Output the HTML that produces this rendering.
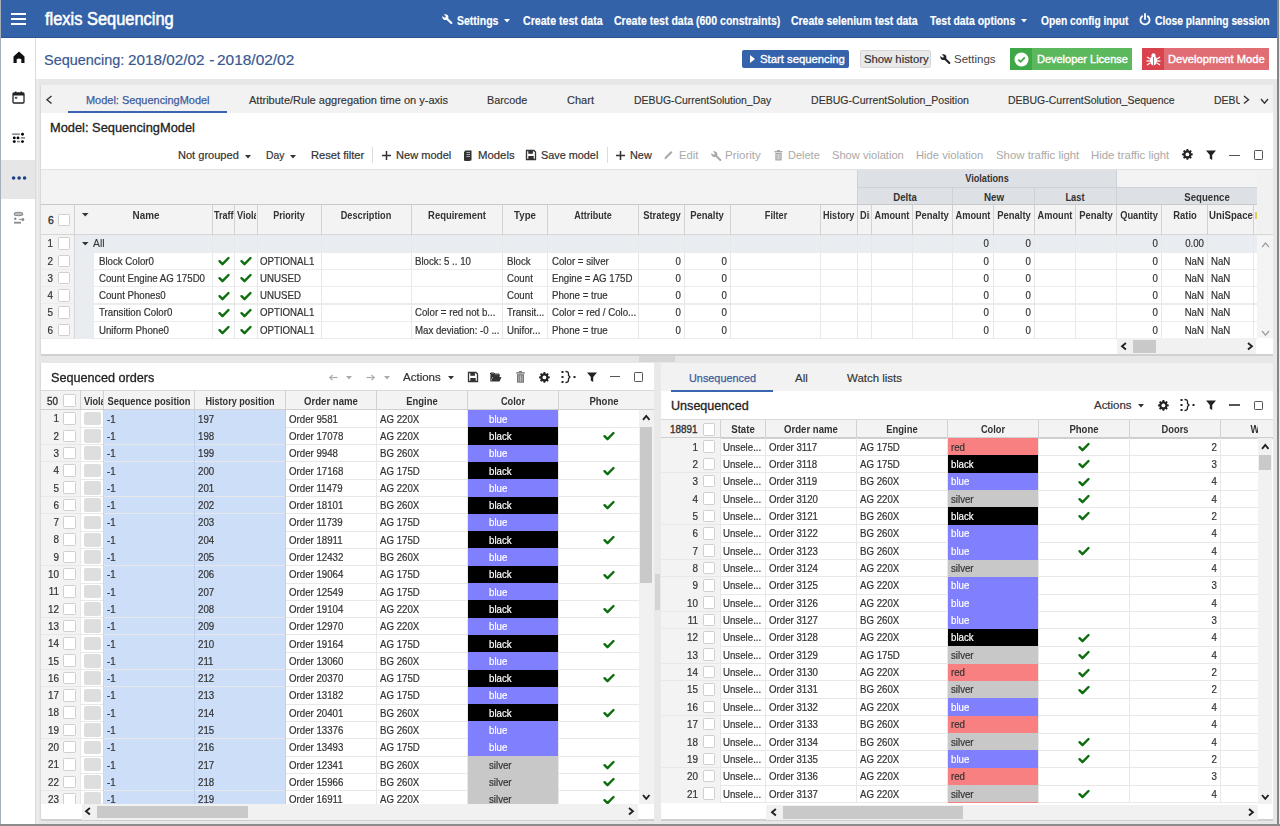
<!DOCTYPE html><html><head><meta charset="utf-8"><style>
html,body{margin:0;padding:0;}
body{width:1280px;height:826px;position:relative;overflow:hidden;filter:blur(0.3px);background:#e7e7e7;font-family:"Liberation Sans",sans-serif;}
.a{position:absolute;}
.t{position:absolute;white-space:nowrap;font-family:"Liberation Sans",sans-serif;}
svg{overflow:visible}
</style></head><body>
<div class="a" style="left:0.00px;top:0.00px;width:1.40px;height:826.00px;background:#a5b0bb;"></div>
<div class="a" style="left:1277.00px;top:0.00px;width:3.00px;height:826.00px;background:#e9e9e9;"></div>
<div class="a" style="left:1277.30px;top:0.00px;width:1.50px;height:826.00px;background:#858585;"></div>
<div class="a" style="left:0.00px;top:824.00px;width:1280.00px;height:2.00px;background:#8c8c8c;"></div>
<div class="a" style="left:1.40px;top:0.00px;width:1275.60px;height:38.00px;background:#3462a8;"></div>
<div class="a" style="left:1.40px;top:37.00px;width:1275.60px;height:1.00px;background:#2b5396;"></div>
<div class="a" style="left:11.00px;top:12.60px;width:15.00px;height:2.10px;background:#fff;"></div>
<div class="a" style="left:11.00px;top:17.80px;width:15.00px;height:2.10px;background:#fff;"></div>
<div class="a" style="left:11.00px;top:23.00px;width:15.00px;height:2.10px;background:#fff;"></div>
<div class="t" style="top:10.60px;font-size:17.6px;line-height:17.6px;color:#fff;left:45.30px;transform:scaleX(0.9334);transform-origin:left 0;-webkit-text-stroke:0.55px #fff;">flexis Sequencing</div>
<svg class="a" style="left:441.00px;top:13.00px;" width="12" height="12" viewBox="0 0 12 12"><path transform="translate(12,0) scale(-1,1)" d="M10.6 2.9 8.9 4.6 7.4 4.6 7.4 3.1 9.1 1.4C7.9 0.9 6.4 1.2 5.5 2.1 4.6 3 4.4 4.3 4.8 5.4L0.9 9.3C0.5 9.7 0.5 10.4 0.9 10.8 1.3 11.2 2 11.2 2.4 10.8L6.3 6.9C7.4 7.3 8.8 7.1 9.7 6.2 10.6 5.3 10.9 4 10.6 2.9Z" fill="#fff"/></svg>
<div class="t" style="top:14.84px;font-size:12px;line-height:12px;color:#fff;left:456.50px;transform:scaleX(0.8753);transform-origin:left 0;-webkit-text-stroke:0.15px #fff;font-weight:bold;">Settings</div>
<svg class="a" style="left:503.50px;top:18.50px;" width="6" height="4" viewBox="0 0 6 4"><path d="M0 0H6L3.0 3.5Z" fill="#fff"/></svg>
<div class="t" style="top:14.84px;font-size:12px;line-height:12px;color:#fff;left:523.30px;transform:scaleX(0.8844);transform-origin:left 0;-webkit-text-stroke:0.15px #fff;font-weight:bold;">Create test data</div>
<div class="t" style="top:14.84px;font-size:12px;line-height:12px;color:#fff;left:613.80px;transform:scaleX(0.8782);transform-origin:left 0;-webkit-text-stroke:0.15px #fff;font-weight:bold;">Create test data (600 constraints)</div>
<div class="t" style="top:14.84px;font-size:12px;line-height:12px;color:#fff;left:791.30px;transform:scaleX(0.8710);transform-origin:left 0;-webkit-text-stroke:0.15px #fff;font-weight:bold;">Create selenium test data</div>
<div class="t" style="top:14.84px;font-size:12px;line-height:12px;color:#fff;left:930.10px;transform:scaleX(0.8658);transform-origin:left 0;-webkit-text-stroke:0.15px #fff;font-weight:bold;">Test data options</div>
<svg class="a" style="left:1021.00px;top:18.50px;" width="6" height="4" viewBox="0 0 6 4"><path d="M0 0H6L3.0 3.5Z" fill="#fff"/></svg>
<div class="t" style="top:14.84px;font-size:12px;line-height:12px;color:#fff;left:1041.30px;transform:scaleX(0.8527);transform-origin:left 0;-webkit-text-stroke:0.15px #fff;font-weight:bold;">Open config input</div>
<svg class="a" style="left:1139.00px;top:13.00px;" width="12" height="12" viewBox="0 0 12 12"><path d="M3.2 3.2A4.6 4.6 0 1 0 8.8 3.2" fill="none" stroke="#fff" stroke-width="1.8" stroke-linecap="round"/><path d="M6 1V6" stroke="#fff" stroke-width="1.8" stroke-linecap="round"/></svg>
<div class="t" style="top:14.84px;font-size:12px;line-height:12px;color:#fff;left:1154.80px;transform:scaleX(0.8553);transform-origin:left 0;-webkit-text-stroke:0.15px #fff;font-weight:bold;">Close planning session</div>
<div class="a" style="left:1.40px;top:38.00px;width:33.60px;height:786.00px;background:#ffffff;"></div>
<div class="a" style="left:35.00px;top:38.00px;width:1.00px;height:786.00px;background:#dcdcdc;"></div>
<div class="a" style="left:1.40px;top:159.50px;width:33.60px;height:39.00px;background:#e6e6e6;"></div>
<svg class="a" style="left:13.00px;top:51.00px;" width="12" height="12" viewBox="0 0 12 12"><path d="M6 0.5 11.5 5.5V12H8.3V8.3Q6 6.8 3.7 8.3V12H0.5V5.5Z" fill="#111"/></svg>
<svg class="a" style="left:12.20px;top:91.00px;" width="13" height="13" viewBox="0 0 13 13"><rect x="1" y="2" width="11" height="10" rx="1" fill="none" stroke="#222" stroke-width="1.3"/><rect x="1" y="2" width="11" height="2.5" fill="#222"/><rect x="3" y="0.5" width="1.4" height="2.5" fill="#222"/><rect x="8.6" y="0.5" width="1.4" height="2.5" fill="#222"/><rect x="2.8" y="5.8" width="2.5" height="2" fill="#555"/></svg>
<svg class="a" style="left:8.00px;top:128.00px;" width="22" height="20" viewBox="0 0 22 20"><g fill="#000"><circle cx="14.5" cy="6.2" r="1.45"/><circle cx="6.3" cy="9.9" r="1.45"/><circle cx="10" cy="9.9" r="1.45"/><circle cx="6.3" cy="13.6" r="1.45"/><circle cx="14.5" cy="13.6" r="1.45"/></g><g stroke="#8a8a8a" stroke-width="1.7"><path d="M4.2 6.2H11.9"/><path d="M12.8 9.9H17"/><path d="M9 13.6H12.1"/></g></svg>
<svg class="a" style="left:10.50px;top:175.80px;" width="17" height="4" viewBox="0 0 17 4"><g fill="#1d3f80"><circle cx="2.6" cy="2" r="1.8"/><circle cx="8.1" cy="2" r="1.8"/><circle cx="13.6" cy="2" r="1.8"/></g></svg>
<svg class="a" style="left:8.00px;top:205.00px;" width="22" height="25" viewBox="0 0 22 25"><ellipse cx="10.5" cy="9" rx="4.2" ry="1.7" fill="#bdbdbd" stroke="#8a8a8a" stroke-width="1.1"/><circle cx="7.3" cy="13.8" r="1.2" fill="#8a8a8a"/><path d="M10.8 14.4H13.5" stroke="#9a9a9a" stroke-width="1.1"/><circle cx="14.8" cy="14.4" r="1.5" fill="#8a8a8a"/><rect x="6" y="16.8" width="7" height="1.8" fill="#8a8a8a"/></svg>
<div class="a" style="left:36.00px;top:38.00px;width:1241.00px;height:41.00px;background:#ffffff;"></div>
<div class="t" style="top:52.18px;font-size:15.5px;line-height:15.5px;color:#395792;left:44.40px;transform:scaleX(0.9327);transform-origin:left 0;-webkit-text-stroke:0.2px #395792;">Sequencing:</div>
<div class="t" style="top:52.18px;font-size:15.5px;line-height:15.5px;color:#395792;left:128.20px;transform:scaleX(0.9846);transform-origin:left 0;-webkit-text-stroke:0.2px #395792;">2018/02/02</div>
<div class="t" style="top:52.18px;font-size:15.5px;line-height:15.5px;color:#395792;left:209.30px;-webkit-text-stroke:0.2px #395792;">-</div>
<div class="t" style="top:52.18px;font-size:15.5px;line-height:15.5px;color:#395792;left:216.60px;transform:scaleX(0.9962);transform-origin:left 0;-webkit-text-stroke:0.2px #395792;">2018/02/02</div>
<div class="a" style="left:742.00px;top:49.80px;width:106.60px;height:18.60px;background:#3463ab;border-radius:2px;"></div>
<svg class="a" style="left:750.00px;top:55.20px;" width="6" height="8" viewBox="0 0 6 8"><path d="M0 0 5 4 0 8Z" fill="#fff"/></svg>
<div class="t" style="top:53.61px;font-size:11.8px;line-height:11.8px;color:#fff;left:760.30px;transform:scaleX(0.9580);transform-origin:left 0;-webkit-text-stroke:0.35px #fff;">Start sequencing</div>
<div class="a" style="left:860.00px;top:49.80px;width:71.00px;height:18.60px;background:#e9e9e9;border:1px solid #d6d6d6;box-sizing:border-box;border-radius:2px;"></div>
<div class="t" style="top:53.61px;font-size:11.8px;line-height:11.8px;color:#333;left:863.80px;transform:scaleX(0.9568);transform-origin:left 0;-webkit-text-stroke:0.2px #333;">Show history</div>
<svg class="a" style="left:939.00px;top:52.50px;" width="12" height="12" viewBox="0 0 12 12"><path transform="translate(12,0) scale(-1,1)" d="M10.6 2.9 8.9 4.6 7.4 4.6 7.4 3.1 9.1 1.4C7.9 0.9 6.4 1.2 5.5 2.1 4.6 3 4.4 4.3 4.8 5.4L0.9 9.3C0.5 9.7 0.5 10.4 0.9 10.8 1.3 11.2 2 11.2 2.4 10.8L6.3 6.9C7.4 7.3 8.8 7.1 9.7 6.2 10.6 5.3 10.9 4 10.6 2.9Z" fill="#222"/></svg>
<div class="t" style="top:53.61px;font-size:11.8px;line-height:11.8px;color:#444;left:954.00px;transform:scaleX(0.9739);transform-origin:left 0;">Settings</div>
<div class="a" style="left:1009.80px;top:48.00px;width:122.60px;height:21.50px;background:#5cb85c;"></div>
<div class="a" style="left:1009.80px;top:48.00px;width:21.90px;height:21.50px;background:#3fa846;"></div>
<svg class="a" style="left:1013.50px;top:51.50px;" width="15" height="15" viewBox="0 0 15 15"><circle cx="7.5" cy="7.5" r="7" fill="#fff"/><path d="M4.3 7.6 6.6 9.8 10.8 5.4" fill="none" stroke="#3fa846" stroke-width="1.8"/></svg>
<div class="t" style="top:53.61px;font-size:11.8px;line-height:11.8px;color:#fff;left:1037.30px;transform:scaleX(0.9295);transform-origin:left 0;-webkit-text-stroke:0.4px #fff;">Developer License</div>
<div class="a" style="left:1141.80px;top:48.00px;width:127.20px;height:21.50px;background:#e06d74;"></div>
<div class="a" style="left:1141.80px;top:48.00px;width:21.80px;height:21.50px;background:#d9434e;"></div>
<svg class="a" style="left:1145.50px;top:51.50px;" width="15" height="15" viewBox="0 0 15 15"><g fill="#fff"><ellipse cx="7.5" cy="8.5" rx="3.6" ry="4.8"/><circle cx="7.5" cy="3.2" r="2"/></g><g stroke="#fff" stroke-width="1.2"><path d="M1 5 4 7"/><path d="M14 5 11 7"/><path d="M0.5 9H4"/><path d="M14.5 9H11"/><path d="M1 13 4 11"/><path d="M14 13 11 11"/></g><path d="M7.5 5V13" stroke="#d9434e" stroke-width="0.9"/></svg>
<div class="t" style="top:53.61px;font-size:11.8px;line-height:11.8px;color:#fff;left:1168.30px;transform:scaleX(0.9446);transform-origin:left 0;-webkit-text-stroke:0.4px #fff;">Development Mode</div>
<div class="a" style="left:41.00px;top:85.00px;width:1231.50px;height:270.00px;background:#ffffff;"></div>
<div class="a" style="left:41.00px;top:85.00px;width:1231.50px;height:28.00px;background:#f2f2f2;"></div>
<svg class="a" style="left:46.50px;top:96.00px;" width="4.5" height="7.5" viewBox="0 0 4.5 7.5"><path d="M4.5 0 0 3.75 4.5 7.5" fill="none" stroke="#333" stroke-width="1.4"/></svg>
<div class="t" style="top:94.68px;font-size:11.3px;line-height:11.3px;color:#3d5d9d;left:86.00px;transform:scaleX(0.9689);transform-origin:left 0;-webkit-text-stroke:0.25px #3d5d9d;">Model: SequencingModel</div>
<div class="a" style="left:67.50px;top:111.20px;width:159.50px;height:1.80px;background:#3a66b0;"></div>
<div class="t" style="top:94.68px;font-size:11.3px;line-height:11.3px;color:#333;left:248.70px;transform:scaleX(0.9751);transform-origin:left 0;-webkit-text-stroke:0.15px #333;">Attribute/Rule aggregation time on y-axis</div>
<div class="t" style="top:94.68px;font-size:11.3px;line-height:11.3px;color:#333;left:487.00px;transform:scaleX(0.9552);transform-origin:left 0;-webkit-text-stroke:0.15px #333;">Barcode</div>
<div class="t" style="top:94.68px;font-size:11.3px;line-height:11.3px;color:#333;left:566.80px;transform:scaleX(0.9770);transform-origin:left 0;-webkit-text-stroke:0.15px #333;">Chart</div>
<div class="t" style="top:94.68px;font-size:11.3px;line-height:11.3px;color:#333;left:633.60px;transform:scaleX(0.9219);transform-origin:left 0;-webkit-text-stroke:0.15px #333;">DEBUG-CurrentSolution_Day</div>
<div class="t" style="top:94.68px;font-size:11.3px;line-height:11.3px;color:#333;left:810.50px;transform:scaleX(0.9348);transform-origin:left 0;-webkit-text-stroke:0.15px #333;">DEBUG-CurrentSolution_Position</div>
<div class="t" style="top:94.68px;font-size:11.3px;line-height:11.3px;color:#333;left:1008.00px;transform:scaleX(0.9276);transform-origin:left 0;-webkit-text-stroke:0.15px #333;">DEBUG-CurrentSolution_Sequence</div>
<div class="a" style="left:1214px;top:94px;width:26px;height:14px;overflow:hidden">
<div class="t" style="top:0.68px;font-size:11.3px;line-height:11.3px;color:#333;left:0.00px;transform:scaleX(0.925);transform-origin:left 0;-webkit-text-stroke:0.15px #333;">DEBUG</div>
</div>
<svg class="a" style="left:1244.00px;top:96.00px;" width="4.5" height="7.5" viewBox="0 0 4.5 7.5"><path d="M0 0 4.5 3.75 0 7.5" fill="none" stroke="#333" stroke-width="1.4"/></svg>
<svg class="a" style="left:1260.50px;top:98.50px;" width="7" height="4.2" viewBox="0 0 7 4.2"><path d="M0 0 3.5 4.2 7 0" fill="none" stroke="#333" stroke-width="1.4"/></svg>
<div class="t" style="top:121.20px;font-size:13px;line-height:13px;color:#222;left:50.30px;transform:scaleX(0.9877);transform-origin:left 0;-webkit-text-stroke:0.3px #222;">Model: SequencingModel</div>
<div class="t" style="top:149.93px;font-size:11.3px;line-height:11.3px;color:#333;left:178.20px;transform:scaleX(0.9775);transform-origin:left 0;-webkit-text-stroke:0.2px #333;">Not grouped</div>
<svg class="a" style="left:245.00px;top:154.50px;" width="6" height="4" viewBox="0 0 6 4"><path d="M0 0H6L3.0 3.5Z" fill="#333"/></svg>
<div class="t" style="top:149.93px;font-size:11.3px;line-height:11.3px;color:#333;left:265.60px;transform:scaleX(0.9153);transform-origin:left 0;-webkit-text-stroke:0.2px #333;">Day</div>
<svg class="a" style="left:290.00px;top:154.50px;" width="6" height="4" viewBox="0 0 6 4"><path d="M0 0H6L3.0 3.5Z" fill="#333"/></svg>
<div class="t" style="top:149.93px;font-size:11.3px;line-height:11.3px;color:#333;left:311.40px;transform:scaleX(0.9869);transform-origin:left 0;-webkit-text-stroke:0.2px #333;">Reset filter</div>
<div class="a" style="left:372.00px;top:147.00px;width:1.00px;height:16.00px;background:#dcdcdc;"></div>
<svg class="a" style="left:381.50px;top:150.50px;" width="9" height="9" viewBox="0 0 9 9"><path d="M4.5 0V9M0 4.5H9" stroke="#333" stroke-width="1.5"/></svg>
<div class="t" style="top:149.93px;font-size:11.3px;line-height:11.3px;color:#333;left:396.00px;transform:scaleX(0.9783);transform-origin:left 0;-webkit-text-stroke:0.2px #333;">New model</div>
<svg class="a" style="left:464.00px;top:149.50px;" width="8" height="11" viewBox="0 0 8 11"><rect x="1" y="0.5" width="6.5" height="10" fill="#333"/><path d="M0.5 1.5V10.5H6" stroke="#333" fill="none"/><path d="M2.5 2.5H6M2.5 4.5H6M2.5 6.5H6" stroke="#fff" stroke-width="0.6"/></svg>
<div class="t" style="top:149.93px;font-size:11.3px;line-height:11.3px;color:#333;left:478.00px;transform:scaleX(1.0046);transform-origin:left 0;-webkit-text-stroke:0.2px #333;">Models</div>
<svg class="a" style="left:526.00px;top:150.00px;" width="10" height="10" viewBox="0 0 10 10"><path d="M0.5 0.5H8L9.5 2V9.5H0.5Z" fill="none" stroke="#333" stroke-width="1.3"/><rect x="2.3" y="0.8" width="4.6" height="3" fill="#333"/><rect x="2.3" y="6" width="5.4" height="3.5" fill="#333"/></svg>
<div class="t" style="top:149.93px;font-size:11.3px;line-height:11.3px;color:#333;left:541.00px;transform:scaleX(0.9604);transform-origin:left 0;-webkit-text-stroke:0.2px #333;">Save model</div>
<div class="a" style="left:606.50px;top:147.00px;width:1.00px;height:16.00px;background:#dcdcdc;"></div>
<svg class="a" style="left:615.50px;top:150.50px;" width="9" height="9" viewBox="0 0 9 9"><path d="M4.5 0V9M0 4.5H9" stroke="#333" stroke-width="1.5"/></svg>
<div class="t" style="top:149.93px;font-size:11.3px;line-height:11.3px;color:#333;left:630.00px;transform:scaleX(0.9638);transform-origin:left 0;-webkit-text-stroke:0.2px #333;">New</div>
<svg class="a" style="left:663.50px;top:150.00px;" width="9" height="10" viewBox="0 0 9 10"><path d="M0.5 9.5 1 7 7 1 8.5 2.5 2.5 8.5Z" fill="#a9a9a9"/></svg>
<div class="t" style="top:149.93px;font-size:11.3px;line-height:11.3px;color:#a9a9a9;left:679.00px;transform:scaleX(0.9909);transform-origin:left 0;">Edit</div>
<svg class="a" style="left:709.50px;top:150.00px;" width="12" height="12" viewBox="0 0 12 12"><path transform="translate(12,0) scale(-1,1)" d="M10.6 2.9 8.9 4.6 7.4 4.6 7.4 3.1 9.1 1.4C7.9 0.9 6.4 1.2 5.5 2.1 4.6 3 4.4 4.3 4.8 5.4L0.9 9.3C0.5 9.7 0.5 10.4 0.9 10.8 1.3 11.2 2 11.2 2.4 10.8L6.3 6.9C7.4 7.3 8.8 7.1 9.7 6.2 10.6 5.3 10.9 4 10.6 2.9Z" fill="#a9a9a9"/></svg>
<div class="t" style="top:149.93px;font-size:11.3px;line-height:11.3px;color:#a9a9a9;left:725.00px;transform:scaleX(1.0181);transform-origin:left 0;">Priority</div>
<svg class="a" style="left:773.50px;top:149.50px;" width="9" height="11" viewBox="0 0 9 11"><rect x="0.5" y="1" width="8" height="1.4" fill="#a9a9a9"/><rect x="3" y="0" width="3" height="1.4" fill="#a9a9a9"/><rect x="1.3" y="3" width="6.4" height="7.5" fill="#a9a9a9"/><path d="M3 4V9.5M4.5 4V9.5M6 4V9.5" stroke="#fff" stroke-width="0.5"/></svg>
<div class="t" style="top:149.93px;font-size:11.3px;line-height:11.3px;color:#a9a9a9;left:787.50px;transform:scaleX(0.9735);transform-origin:left 0;">Delete</div>
<div class="t" style="top:149.93px;font-size:11.3px;line-height:11.3px;color:#a9a9a9;left:831.50px;transform:scaleX(0.9853);transform-origin:left 0;">Show violation</div>
<div class="t" style="top:149.93px;font-size:11.3px;line-height:11.3px;color:#a9a9a9;left:916.00px;transform:scaleX(0.9921);transform-origin:left 0;">Hide violation</div>
<div class="t" style="top:149.93px;font-size:11.3px;line-height:11.3px;color:#a9a9a9;left:996.00px;transform:scaleX(1.0073);transform-origin:left 0;">Show traffic light</div>
<div class="t" style="top:149.93px;font-size:11.3px;line-height:11.3px;color:#a9a9a9;left:1091.00px;transform:scaleX(1.0082);transform-origin:left 0;">Hide traffic light</div>
<svg class="a" style="left:1182.20px;top:149.30px;" width="10.8" height="10.8" viewBox="0 0 10.8 10.8"><path d="M9.13 4.25 L10.73 4.54 L10.73 6.26 L9.13 6.55 L8.85 7.22 L9.78 8.56 L8.56 9.78 L7.22 8.85 L6.55 9.13 L6.26 10.73 L4.54 10.73 L4.25 9.13 L3.58 8.85 L2.24 9.78 L1.02 8.56 L1.95 7.22 L1.67 6.55 L0.07 6.26 L0.07 4.54 L1.67 4.25 L1.95 3.58 L1.02 2.24 L2.24 1.02 L3.58 1.95 L4.25 1.67 L4.54 0.07 L6.26 0.07 L6.55 1.67 L7.22 1.95 L8.56 1.02 L9.78 2.24 L8.85 3.58Z" fill="#222"/><circle cx="5.4" cy="5.4" r="3.9" fill="#222"/><circle cx="5.4" cy="5.4" r="1.9" fill="#fff"/></svg>
<svg class="a" style="left:1206.00px;top:149.50px;" width="10" height="10" viewBox="0 0 10 10"><path d="M0 0.5H10L6.2 5V10L3.8 8.5V5Z" fill="#222"/></svg>
<div class="a" style="left:1229.30px;top:154.60px;width:10.30px;height:1.30px;background:#555;"></div>
<div class="a" style="left:1253.60px;top:150.20px;width:9.50px;height:9.50px;border:1.3px solid #555;box-sizing:border-box;border-radius:1.2px;"></div>
<div class="a" style="left:41.00px;top:168.50px;width:1231.50px;height:1.00px;background:#e2e2e2;"></div>
<div class="a" style="left:41.00px;top:169.50px;width:1231.50px;height:35.00px;background:#f3f3f3;"></div>
<div class="a" style="left:857.60px;top:169.50px;width:258.40px;height:17.50px;background:#dde1e6;"></div>
<div class="a" style="left:857.60px;top:187.00px;width:399.40px;height:17.50px;background:#dde1e6;"></div>
<div class="a" style="left:857.60px;top:186.50px;width:399.40px;height:1.00px;background:#cdd2d8;"></div>
<div class="a" style="left:857.10px;top:187.00px;width:1.00px;height:17.50px;background:#cdd2d8;"></div>
<div class="a" style="left:952.20px;top:187.00px;width:1.00px;height:17.50px;background:#cdd2d8;"></div>
<div class="a" style="left:1033.80px;top:187.00px;width:1.00px;height:17.50px;background:#cdd2d8;"></div>
<div class="a" style="left:1115.50px;top:187.00px;width:1.00px;height:17.50px;background:#cdd2d8;"></div>
<div class="a" style="left:857.10px;top:169.50px;width:1.00px;height:35.00px;background:#cdd2d8;"></div>
<div class="a" style="left:1115.50px;top:169.50px;width:1.00px;height:17.50px;background:#cdd2d8;"></div>
<div class="t" style="top:173.50px;font-size:10.4px;line-height:10.4px;color:#333;left:836.80px;width:300px;text-align:center;transform:scaleX(0.8812);transform-origin:center 0;font-weight:bold;">Violations</div>
<div class="t" style="top:192.50px;font-size:10.4px;line-height:10.4px;color:#333;left:755.10px;width:300px;text-align:center;transform:scaleX(0.9275);transform-origin:center 0;font-weight:bold;">Delta</div>
<div class="t" style="top:192.50px;font-size:10.4px;line-height:10.4px;color:#333;left:843.50px;width:300px;text-align:center;transform:scaleX(0.9452);transform-origin:center 0;font-weight:bold;">New</div>
<div class="t" style="top:192.50px;font-size:10.4px;line-height:10.4px;color:#333;left:925.20px;width:300px;text-align:center;transform:scaleX(0.8933);transform-origin:center 0;font-weight:bold;">Last</div>
<div class="t" style="top:192.50px;font-size:10.4px;line-height:10.4px;color:#333;left:1056.50px;width:300px;text-align:center;transform:scaleX(0.9262);transform-origin:center 0;font-weight:bold;">Sequence</div>
<div class="a" style="left:41.00px;top:204.50px;width:1216.00px;height:30.00px;background:#f3f3f3;"></div>
<div class="a" style="left:41.00px;top:204.00px;width:1216.00px;height:1.20px;background:#c9c9c9;"></div>
<div class="a" style="left:41.00px;top:234.00px;width:1231.50px;height:1.20px;background:#d6d6d6;"></div>
<div class="a" style="left:74.25px;top:205.00px;width:1.00px;height:30.00px;background:#d2d2d2;"></div>
<div class="a" style="left:211.75px;top:205.00px;width:1.00px;height:30.00px;background:#d2d2d2;"></div>
<div class="a" style="left:234.25px;top:205.00px;width:1.00px;height:30.00px;background:#d2d2d2;"></div>
<div class="a" style="left:256.75px;top:205.00px;width:1.00px;height:30.00px;background:#d2d2d2;"></div>
<div class="a" style="left:320.50px;top:205.00px;width:1.00px;height:30.00px;background:#d2d2d2;"></div>
<div class="a" style="left:411.10px;top:205.00px;width:1.00px;height:30.00px;background:#d2d2d2;"></div>
<div class="a" style="left:502.20px;top:205.00px;width:1.00px;height:30.00px;background:#d2d2d2;"></div>
<div class="a" style="left:547.40px;top:205.00px;width:1.00px;height:30.00px;background:#d2d2d2;"></div>
<div class="a" style="left:638.20px;top:205.00px;width:1.00px;height:30.00px;background:#d2d2d2;"></div>
<div class="a" style="left:684.00px;top:205.00px;width:1.00px;height:30.00px;background:#d2d2d2;"></div>
<div class="a" style="left:729.90px;top:205.00px;width:1.00px;height:30.00px;background:#d2d2d2;"></div>
<div class="a" style="left:820.20px;top:205.00px;width:1.00px;height:30.00px;background:#d2d2d2;"></div>
<div class="a" style="left:857.10px;top:205.00px;width:1.00px;height:30.00px;background:#d2d2d2;"></div>
<div class="a" style="left:870.70px;top:205.00px;width:1.00px;height:30.00px;background:#d2d2d2;"></div>
<div class="a" style="left:911.50px;top:205.00px;width:1.00px;height:30.00px;background:#d2d2d2;"></div>
<div class="a" style="left:952.20px;top:205.00px;width:1.00px;height:30.00px;background:#d2d2d2;"></div>
<div class="a" style="left:992.50px;top:205.00px;width:1.00px;height:30.00px;background:#d2d2d2;"></div>
<div class="a" style="left:1033.80px;top:205.00px;width:1.00px;height:30.00px;background:#d2d2d2;"></div>
<div class="a" style="left:1075.00px;top:205.00px;width:1.00px;height:30.00px;background:#d2d2d2;"></div>
<div class="a" style="left:1115.50px;top:205.00px;width:1.00px;height:30.00px;background:#d2d2d2;"></div>
<div class="a" style="left:1161.30px;top:205.00px;width:1.00px;height:30.00px;background:#d2d2d2;"></div>
<div class="a" style="left:1207.20px;top:205.00px;width:1.00px;height:30.00px;background:#d2d2d2;"></div>
<div class="a" style="left:1252.90px;top:205.00px;width:1.00px;height:30.00px;background:#d2d2d2;"></div>
<div class="a" style="left:1257.00px;top:169.50px;width:15.50px;height:64.50px;background:#f1f1f1;"></div>
<div class="t" style="top:216.28px;font-size:10.3px;line-height:10.3px;color:#333;left:48.00px;-webkit-text-stroke:0.35px #333;">6</div>
<div class="a" style="left:57.80px;top:213.60px;width:12.60px;height:12.60px;background:#fff;border:1px solid #cfcfcf;box-sizing:border-box;border-radius:1.5px;"></div>
<svg class="a" style="left:82.00px;top:213.20px;" width="6.5" height="4" viewBox="0 0 6.5 4"><path d="M0 0H6.5L3.25 3.5Z" fill="#333"/></svg>
<div class="t" style="top:210.50px;font-size:10.4px;line-height:10.4px;color:#333;left:-4.00px;width:300px;text-align:center;transform:scaleX(0.9514);transform-origin:center 0;font-weight:bold;">Name</div>
<div class="t" style="top:210.50px;font-size:10.4px;line-height:10.4px;color:#333;left:139.12px;width:300px;text-align:center;transform:scaleX(0.8630);transform-origin:center 0;font-weight:bold;">Priority</div>
<div class="t" style="top:210.50px;font-size:10.4px;line-height:10.4px;color:#333;left:216.30px;width:300px;text-align:center;transform:scaleX(0.8833);transform-origin:center 0;font-weight:bold;">Description</div>
<div class="t" style="top:210.50px;font-size:10.4px;line-height:10.4px;color:#333;left:307.15px;width:300px;text-align:center;transform:scaleX(0.9100);transform-origin:center 0;font-weight:bold;">Requirement</div>
<div class="t" style="top:210.50px;font-size:10.4px;line-height:10.4px;color:#333;left:375.30px;width:300px;text-align:center;transform:scaleX(0.9321);transform-origin:center 0;font-weight:bold;">Type</div>
<div class="t" style="top:210.50px;font-size:10.4px;line-height:10.4px;color:#333;left:443.30px;width:300px;text-align:center;transform:scaleX(0.8683);transform-origin:center 0;font-weight:bold;">Attribute</div>
<div class="t" style="top:210.50px;font-size:10.4px;line-height:10.4px;color:#333;left:511.60px;width:300px;text-align:center;transform:scaleX(0.9042);transform-origin:center 0;font-weight:bold;">Strategy</div>
<div class="t" style="top:210.50px;font-size:10.4px;line-height:10.4px;color:#333;left:557.45px;width:300px;text-align:center;transform:scaleX(0.9108);transform-origin:center 0;font-weight:bold;">Penalty</div>
<div class="t" style="top:210.50px;font-size:10.4px;line-height:10.4px;color:#333;left:625.55px;width:300px;text-align:center;transform:scaleX(0.8831);transform-origin:center 0;font-weight:bold;">Filter</div>
<div class="t" style="top:210.50px;font-size:10.4px;line-height:10.4px;color:#333;left:741.60px;width:300px;text-align:center;transform:scaleX(0.8865);transform-origin:center 0;font-weight:bold;">Amount</div>
<div class="t" style="top:210.50px;font-size:10.4px;line-height:10.4px;color:#333;left:782.35px;width:300px;text-align:center;transform:scaleX(0.9108);transform-origin:center 0;font-weight:bold;">Penalty</div>
<div class="t" style="top:210.50px;font-size:10.4px;line-height:10.4px;color:#333;left:822.85px;width:300px;text-align:center;transform:scaleX(0.8865);transform-origin:center 0;font-weight:bold;">Amount</div>
<div class="t" style="top:210.50px;font-size:10.4px;line-height:10.4px;color:#333;left:863.65px;width:300px;text-align:center;transform:scaleX(0.9108);transform-origin:center 0;font-weight:bold;">Penalty</div>
<div class="t" style="top:210.50px;font-size:10.4px;line-height:10.4px;color:#333;left:904.90px;width:300px;text-align:center;transform:scaleX(0.8865);transform-origin:center 0;font-weight:bold;">Amount</div>
<div class="t" style="top:210.50px;font-size:10.4px;line-height:10.4px;color:#333;left:945.75px;width:300px;text-align:center;transform:scaleX(0.9108);transform-origin:center 0;font-weight:bold;">Penalty</div>
<div class="t" style="top:210.50px;font-size:10.4px;line-height:10.4px;color:#333;left:988.90px;width:300px;text-align:center;transform:scaleX(0.8918);transform-origin:center 0;font-weight:bold;">Quantity</div>
<div class="t" style="top:210.50px;font-size:10.4px;line-height:10.4px;color:#333;left:1034.75px;width:300px;text-align:center;transform:scaleX(0.9074);transform-origin:center 0;font-weight:bold;">Ratio</div>
<div class="t" style="top:210.50px;font-size:10.4px;line-height:10.4px;color:#333;left:1080.55px;width:300px;text-align:center;transform:scaleX(0.9244);transform-origin:center 0;font-weight:bold;">UniSpace</div>
<div class="a" style="left:212.75px;top:206px;width:21.00px;height:26px;overflow:hidden">
<div class="t" style="top:4.50px;font-size:10.4px;line-height:10.4px;color:#333;left:1.55px;transform:scaleX(0.8717);transform-origin:left 0;font-weight:bold;">Traffic light</div>
</div>
<div class="a" style="left:235.25px;top:206px;width:21.00px;height:26px;overflow:hidden">
<div class="t" style="top:4.50px;font-size:10.4px;line-height:10.4px;color:#333;left:2.05px;transform:scaleX(0.8812);transform-origin:left 0;font-weight:bold;">Violations</div>
</div>
<div class="a" style="left:821.20px;top:206px;width:35.40px;height:26px;overflow:hidden">
<div class="t" style="top:4.50px;font-size:10.4px;line-height:10.4px;color:#333;left:2.20px;transform:scaleX(0.8770);transform-origin:left 0;font-weight:bold;">History</div>
</div>
<div class="a" style="left:858.10px;top:206px;width:12.10px;height:26px;overflow:hidden">
<div class="t" style="top:4.50px;font-size:10.4px;line-height:10.4px;color:#333;left:1.60px;transform:scaleX(0.8841);transform-origin:left 0;font-weight:bold;">Direction</div>
</div>
<div class="a" style="left:1255.30px;top:211.50px;width:1.30px;height:7.00px;background:#e8c860;"></div>
<div class="a" style="left:41.00px;top:235.00px;width:1216.00px;height:17.25px;background:#e9edf1;"></div>
<div class="a" style="left:41.00px;top:235.00px;width:33.75px;height:17.25px;background:#f3f3f3;"></div>
<div class="a" style="left:41.00px;top:251.65px;width:1216.00px;height:1.20px;background:#ececec;"></div>
<div class="a" style="left:57.80px;top:237.30px;width:12.50px;height:12.50px;background:#fff;border:1px solid #cfcfcf;box-sizing:border-box;border-radius:1.5px;"></div>
<div class="t" style="top:239.38px;font-size:10.3px;line-height:10.3px;color:#333;left:-347.50px;width:400px;text-align:right;transform:scaleX(0.96);transform-origin:right 0;-webkit-text-stroke:0.2px #333;">1</div>
<div class="a" style="left:74.75px;top:252.25px;width:19.25px;height:17.25px;background:#e9edf1;"></div>
<div class="a" style="left:41.00px;top:252.25px;width:33.75px;height:17.25px;background:#f3f3f3;"></div>
<div class="a" style="left:41.00px;top:268.90px;width:1216.00px;height:1.20px;background:#ececec;"></div>
<div class="a" style="left:57.80px;top:254.55px;width:12.50px;height:12.50px;background:#fff;border:1px solid #cfcfcf;box-sizing:border-box;border-radius:1.5px;"></div>
<div class="t" style="top:256.63px;font-size:10.3px;line-height:10.3px;color:#333;left:-347.50px;width:400px;text-align:right;transform:scaleX(0.96);transform-origin:right 0;-webkit-text-stroke:0.2px #333;">2</div>
<div class="a" style="left:74.75px;top:269.50px;width:19.25px;height:17.25px;background:#e9edf1;"></div>
<div class="a" style="left:41.00px;top:269.50px;width:33.75px;height:17.25px;background:#f3f3f3;"></div>
<div class="a" style="left:41.00px;top:286.15px;width:1216.00px;height:1.20px;background:#ececec;"></div>
<div class="a" style="left:57.80px;top:271.80px;width:12.50px;height:12.50px;background:#fff;border:1px solid #cfcfcf;box-sizing:border-box;border-radius:1.5px;"></div>
<div class="t" style="top:273.88px;font-size:10.3px;line-height:10.3px;color:#333;left:-347.50px;width:400px;text-align:right;transform:scaleX(0.96);transform-origin:right 0;-webkit-text-stroke:0.2px #333;">3</div>
<div class="a" style="left:74.75px;top:286.75px;width:19.25px;height:17.25px;background:#e9edf1;"></div>
<div class="a" style="left:41.00px;top:286.75px;width:33.75px;height:17.25px;background:#f3f3f3;"></div>
<div class="a" style="left:41.00px;top:303.40px;width:1216.00px;height:1.20px;background:#ececec;"></div>
<div class="a" style="left:57.80px;top:289.05px;width:12.50px;height:12.50px;background:#fff;border:1px solid #cfcfcf;box-sizing:border-box;border-radius:1.5px;"></div>
<div class="t" style="top:291.13px;font-size:10.3px;line-height:10.3px;color:#333;left:-347.50px;width:400px;text-align:right;transform:scaleX(0.96);transform-origin:right 0;-webkit-text-stroke:0.2px #333;">4</div>
<div class="a" style="left:74.75px;top:304.00px;width:19.25px;height:17.25px;background:#e9edf1;"></div>
<div class="a" style="left:41.00px;top:304.00px;width:33.75px;height:17.25px;background:#f3f3f3;"></div>
<div class="a" style="left:41.00px;top:320.65px;width:1216.00px;height:1.20px;background:#ececec;"></div>
<div class="a" style="left:57.80px;top:306.30px;width:12.50px;height:12.50px;background:#fff;border:1px solid #cfcfcf;box-sizing:border-box;border-radius:1.5px;"></div>
<div class="t" style="top:308.38px;font-size:10.3px;line-height:10.3px;color:#333;left:-347.50px;width:400px;text-align:right;transform:scaleX(0.96);transform-origin:right 0;-webkit-text-stroke:0.2px #333;">5</div>
<div class="a" style="left:74.75px;top:321.25px;width:19.25px;height:17.25px;background:#e9edf1;"></div>
<div class="a" style="left:41.00px;top:321.25px;width:33.75px;height:17.25px;background:#f3f3f3;"></div>
<div class="a" style="left:41.00px;top:337.90px;width:1216.00px;height:1.20px;background:#ececec;"></div>
<div class="a" style="left:57.80px;top:323.55px;width:12.50px;height:12.50px;background:#fff;border:1px solid #cfcfcf;box-sizing:border-box;border-radius:1.5px;"></div>
<div class="t" style="top:325.63px;font-size:10.3px;line-height:10.3px;color:#333;left:-347.50px;width:400px;text-align:right;transform:scaleX(0.96);transform-origin:right 0;-webkit-text-stroke:0.2px #333;">6</div>
<div class="a" style="left:74.25px;top:235.00px;width:1.00px;height:103.50px;background:#e8e8e8;"></div>
<div class="a" style="left:211.75px;top:235.00px;width:1.00px;height:103.50px;background:#e8e8e8;"></div>
<div class="a" style="left:234.25px;top:235.00px;width:1.00px;height:103.50px;background:#e8e8e8;"></div>
<div class="a" style="left:256.75px;top:235.00px;width:1.00px;height:103.50px;background:#e8e8e8;"></div>
<div class="a" style="left:320.50px;top:235.00px;width:1.00px;height:103.50px;background:#e8e8e8;"></div>
<div class="a" style="left:411.10px;top:235.00px;width:1.00px;height:103.50px;background:#e8e8e8;"></div>
<div class="a" style="left:502.20px;top:235.00px;width:1.00px;height:103.50px;background:#e8e8e8;"></div>
<div class="a" style="left:547.40px;top:235.00px;width:1.00px;height:103.50px;background:#e8e8e8;"></div>
<div class="a" style="left:638.20px;top:235.00px;width:1.00px;height:103.50px;background:#e8e8e8;"></div>
<div class="a" style="left:684.00px;top:235.00px;width:1.00px;height:103.50px;background:#e8e8e8;"></div>
<div class="a" style="left:729.90px;top:235.00px;width:1.00px;height:103.50px;background:#e8e8e8;"></div>
<div class="a" style="left:820.20px;top:235.00px;width:1.00px;height:103.50px;background:#e8e8e8;"></div>
<div class="a" style="left:857.10px;top:235.00px;width:1.00px;height:103.50px;background:#e8e8e8;"></div>
<div class="a" style="left:870.70px;top:235.00px;width:1.00px;height:103.50px;background:#e8e8e8;"></div>
<div class="a" style="left:911.50px;top:235.00px;width:1.00px;height:103.50px;background:#e8e8e8;"></div>
<div class="a" style="left:952.20px;top:235.00px;width:1.00px;height:103.50px;background:#e8e8e8;"></div>
<div class="a" style="left:992.50px;top:235.00px;width:1.00px;height:103.50px;background:#e8e8e8;"></div>
<div class="a" style="left:1033.80px;top:235.00px;width:1.00px;height:103.50px;background:#e8e8e8;"></div>
<div class="a" style="left:1075.00px;top:235.00px;width:1.00px;height:103.50px;background:#e8e8e8;"></div>
<div class="a" style="left:1115.50px;top:235.00px;width:1.00px;height:103.50px;background:#e8e8e8;"></div>
<div class="a" style="left:1161.30px;top:235.00px;width:1.00px;height:103.50px;background:#e8e8e8;"></div>
<div class="a" style="left:1207.20px;top:235.00px;width:1.00px;height:103.50px;background:#e8e8e8;"></div>
<div class="a" style="left:1252.90px;top:235.00px;width:1.00px;height:103.50px;background:#e8e8e8;"></div>
<div class="a" style="left:74.25px;top:235.00px;width:1.00px;height:103.50px;background:#d8d8d8;"></div>
<svg class="a" style="left:82.00px;top:241.50px;" width="6.5" height="4" viewBox="0 0 6.5 4"><path d="M0 0H6.5L3.25 3.5Z" fill="#333"/></svg>
<div class="t" style="top:238.70px;font-size:10.4px;line-height:10.4px;color:#333;left:93.00px;-webkit-text-stroke:0.1px #333;">All</div>
<div class="t" style="top:239.28px;font-size:10.3px;line-height:10.3px;color:#333;left:589.40px;width:400px;text-align:right;transform:scaleX(0.94);transform-origin:right 0;-webkit-text-stroke:0.2px #333;">0</div>
<div class="t" style="top:239.28px;font-size:10.3px;line-height:10.3px;color:#333;left:630.70px;width:400px;text-align:right;transform:scaleX(0.94);transform-origin:right 0;-webkit-text-stroke:0.2px #333;">0</div>
<div class="t" style="top:239.28px;font-size:10.3px;line-height:10.3px;color:#333;left:758.20px;width:400px;text-align:right;transform:scaleX(0.94);transform-origin:right 0;-webkit-text-stroke:0.2px #333;">0</div>
<div class="t" style="top:239.28px;font-size:10.3px;line-height:10.3px;color:#333;left:804.10px;width:400px;text-align:right;transform:scaleX(0.94);transform-origin:right 0;-webkit-text-stroke:0.2px #333;">0.00</div>
<div class="t" style="top:256.53px;font-size:10.3px;line-height:10.3px;color:#333;left:98.50px;transform:scaleX(0.94);transform-origin:left 0;-webkit-text-stroke:0.2px #333;">Block Color0</div>
<svg class="a" style="left:217.50px;top:256.05px;" width="12.0" height="10.0" viewBox="0 0 12 10"><path d="M1.5 5.2 4.5 8.2 10.5 2" fill="none" stroke="#0d6e0d" stroke-width="2.4" stroke-linecap="round" stroke-linejoin="round"/></svg>
<svg class="a" style="left:240.00px;top:256.05px;" width="12.0" height="10.0" viewBox="0 0 12 10"><path d="M1.5 5.2 4.5 8.2 10.5 2" fill="none" stroke="#0d6e0d" stroke-width="2.4" stroke-linecap="round" stroke-linejoin="round"/></svg>
<div class="t" style="top:256.53px;font-size:10.3px;line-height:10.3px;color:#333;left:260.25px;transform:scaleX(0.94);transform-origin:left 0;-webkit-text-stroke:0.2px #333;">OPTIONAL1</div>
<div class="t" style="top:256.53px;font-size:10.3px;line-height:10.3px;color:#333;left:415.40px;transform:scaleX(0.94);transform-origin:left 0;-webkit-text-stroke:0.2px #333;">Block: 5 .. 10</div>
<div class="t" style="top:256.53px;font-size:10.3px;line-height:10.3px;color:#333;left:506.50px;transform:scaleX(0.94);transform-origin:left 0;-webkit-text-stroke:0.2px #333;">Block</div>
<div class="t" style="top:256.53px;font-size:10.3px;line-height:10.3px;color:#333;left:551.70px;transform:scaleX(0.94);transform-origin:left 0;-webkit-text-stroke:0.2px #333;">Color = silver</div>
<div class="t" style="top:256.53px;font-size:10.3px;line-height:10.3px;color:#333;left:280.90px;width:400px;text-align:right;transform:scaleX(0.94);transform-origin:right 0;-webkit-text-stroke:0.2px #333;">0</div>
<div class="t" style="top:256.53px;font-size:10.3px;line-height:10.3px;color:#333;left:326.80px;width:400px;text-align:right;transform:scaleX(0.94);transform-origin:right 0;-webkit-text-stroke:0.2px #333;">0</div>
<div class="t" style="top:256.53px;font-size:10.3px;line-height:10.3px;color:#333;left:589.40px;width:400px;text-align:right;transform:scaleX(0.94);transform-origin:right 0;-webkit-text-stroke:0.2px #333;">0</div>
<div class="t" style="top:256.53px;font-size:10.3px;line-height:10.3px;color:#333;left:630.70px;width:400px;text-align:right;transform:scaleX(0.94);transform-origin:right 0;-webkit-text-stroke:0.2px #333;">0</div>
<div class="t" style="top:256.53px;font-size:10.3px;line-height:10.3px;color:#333;left:758.20px;width:400px;text-align:right;transform:scaleX(0.94);transform-origin:right 0;-webkit-text-stroke:0.2px #333;">0</div>
<div class="t" style="top:256.53px;font-size:10.3px;line-height:10.3px;color:#333;left:804.10px;width:400px;text-align:right;transform:scaleX(0.94);transform-origin:right 0;-webkit-text-stroke:0.2px #333;">NaN</div>
<div class="t" style="top:256.53px;font-size:10.3px;line-height:10.3px;color:#333;left:1210.70px;transform:scaleX(0.94);transform-origin:left 0;-webkit-text-stroke:0.2px #333;">NaN</div>
<div class="t" style="top:273.78px;font-size:10.3px;line-height:10.3px;color:#333;left:98.50px;transform:scaleX(0.94);transform-origin:left 0;-webkit-text-stroke:0.2px #333;">Count Engine AG 175D0</div>
<svg class="a" style="left:217.50px;top:273.30px;" width="12.0" height="10.0" viewBox="0 0 12 10"><path d="M1.5 5.2 4.5 8.2 10.5 2" fill="none" stroke="#0d6e0d" stroke-width="2.4" stroke-linecap="round" stroke-linejoin="round"/></svg>
<svg class="a" style="left:240.00px;top:273.30px;" width="12.0" height="10.0" viewBox="0 0 12 10"><path d="M1.5 5.2 4.5 8.2 10.5 2" fill="none" stroke="#0d6e0d" stroke-width="2.4" stroke-linecap="round" stroke-linejoin="round"/></svg>
<div class="t" style="top:273.78px;font-size:10.3px;line-height:10.3px;color:#333;left:260.25px;transform:scaleX(0.94);transform-origin:left 0;-webkit-text-stroke:0.2px #333;">UNUSED</div>
<div class="t" style="top:273.78px;font-size:10.3px;line-height:10.3px;color:#333;left:415.40px;transform:scaleX(0.94);transform-origin:left 0;-webkit-text-stroke:0.2px #333;"></div>
<div class="t" style="top:273.78px;font-size:10.3px;line-height:10.3px;color:#333;left:506.50px;transform:scaleX(0.94);transform-origin:left 0;-webkit-text-stroke:0.2px #333;">Count</div>
<div class="t" style="top:273.78px;font-size:10.3px;line-height:10.3px;color:#333;left:551.70px;transform:scaleX(0.94);transform-origin:left 0;-webkit-text-stroke:0.2px #333;">Engine = AG 175D</div>
<div class="t" style="top:273.78px;font-size:10.3px;line-height:10.3px;color:#333;left:280.90px;width:400px;text-align:right;transform:scaleX(0.94);transform-origin:right 0;-webkit-text-stroke:0.2px #333;">0</div>
<div class="t" style="top:273.78px;font-size:10.3px;line-height:10.3px;color:#333;left:326.80px;width:400px;text-align:right;transform:scaleX(0.94);transform-origin:right 0;-webkit-text-stroke:0.2px #333;">0</div>
<div class="t" style="top:273.78px;font-size:10.3px;line-height:10.3px;color:#333;left:589.40px;width:400px;text-align:right;transform:scaleX(0.94);transform-origin:right 0;-webkit-text-stroke:0.2px #333;">0</div>
<div class="t" style="top:273.78px;font-size:10.3px;line-height:10.3px;color:#333;left:630.70px;width:400px;text-align:right;transform:scaleX(0.94);transform-origin:right 0;-webkit-text-stroke:0.2px #333;">0</div>
<div class="t" style="top:273.78px;font-size:10.3px;line-height:10.3px;color:#333;left:758.20px;width:400px;text-align:right;transform:scaleX(0.94);transform-origin:right 0;-webkit-text-stroke:0.2px #333;">0</div>
<div class="t" style="top:273.78px;font-size:10.3px;line-height:10.3px;color:#333;left:804.10px;width:400px;text-align:right;transform:scaleX(0.94);transform-origin:right 0;-webkit-text-stroke:0.2px #333;">NaN</div>
<div class="t" style="top:273.78px;font-size:10.3px;line-height:10.3px;color:#333;left:1210.70px;transform:scaleX(0.94);transform-origin:left 0;-webkit-text-stroke:0.2px #333;">NaN</div>
<div class="t" style="top:291.03px;font-size:10.3px;line-height:10.3px;color:#333;left:98.50px;transform:scaleX(0.94);transform-origin:left 0;-webkit-text-stroke:0.2px #333;">Count Phones0</div>
<svg class="a" style="left:217.50px;top:290.55px;" width="12.0" height="10.0" viewBox="0 0 12 10"><path d="M1.5 5.2 4.5 8.2 10.5 2" fill="none" stroke="#0d6e0d" stroke-width="2.4" stroke-linecap="round" stroke-linejoin="round"/></svg>
<svg class="a" style="left:240.00px;top:290.55px;" width="12.0" height="10.0" viewBox="0 0 12 10"><path d="M1.5 5.2 4.5 8.2 10.5 2" fill="none" stroke="#0d6e0d" stroke-width="2.4" stroke-linecap="round" stroke-linejoin="round"/></svg>
<div class="t" style="top:291.03px;font-size:10.3px;line-height:10.3px;color:#333;left:260.25px;transform:scaleX(0.94);transform-origin:left 0;-webkit-text-stroke:0.2px #333;">UNUSED</div>
<div class="t" style="top:291.03px;font-size:10.3px;line-height:10.3px;color:#333;left:415.40px;transform:scaleX(0.94);transform-origin:left 0;-webkit-text-stroke:0.2px #333;"></div>
<div class="t" style="top:291.03px;font-size:10.3px;line-height:10.3px;color:#333;left:506.50px;transform:scaleX(0.94);transform-origin:left 0;-webkit-text-stroke:0.2px #333;">Count</div>
<div class="t" style="top:291.03px;font-size:10.3px;line-height:10.3px;color:#333;left:551.70px;transform:scaleX(0.94);transform-origin:left 0;-webkit-text-stroke:0.2px #333;">Phone = true</div>
<div class="t" style="top:291.03px;font-size:10.3px;line-height:10.3px;color:#333;left:280.90px;width:400px;text-align:right;transform:scaleX(0.94);transform-origin:right 0;-webkit-text-stroke:0.2px #333;">0</div>
<div class="t" style="top:291.03px;font-size:10.3px;line-height:10.3px;color:#333;left:326.80px;width:400px;text-align:right;transform:scaleX(0.94);transform-origin:right 0;-webkit-text-stroke:0.2px #333;">0</div>
<div class="t" style="top:291.03px;font-size:10.3px;line-height:10.3px;color:#333;left:589.40px;width:400px;text-align:right;transform:scaleX(0.94);transform-origin:right 0;-webkit-text-stroke:0.2px #333;">0</div>
<div class="t" style="top:291.03px;font-size:10.3px;line-height:10.3px;color:#333;left:630.70px;width:400px;text-align:right;transform:scaleX(0.94);transform-origin:right 0;-webkit-text-stroke:0.2px #333;">0</div>
<div class="t" style="top:291.03px;font-size:10.3px;line-height:10.3px;color:#333;left:758.20px;width:400px;text-align:right;transform:scaleX(0.94);transform-origin:right 0;-webkit-text-stroke:0.2px #333;">0</div>
<div class="t" style="top:291.03px;font-size:10.3px;line-height:10.3px;color:#333;left:804.10px;width:400px;text-align:right;transform:scaleX(0.94);transform-origin:right 0;-webkit-text-stroke:0.2px #333;">NaN</div>
<div class="t" style="top:291.03px;font-size:10.3px;line-height:10.3px;color:#333;left:1210.70px;transform:scaleX(0.94);transform-origin:left 0;-webkit-text-stroke:0.2px #333;">NaN</div>
<div class="t" style="top:308.28px;font-size:10.3px;line-height:10.3px;color:#333;left:98.50px;transform:scaleX(0.94);transform-origin:left 0;-webkit-text-stroke:0.2px #333;">Transition Color0</div>
<svg class="a" style="left:217.50px;top:307.80px;" width="12.0" height="10.0" viewBox="0 0 12 10"><path d="M1.5 5.2 4.5 8.2 10.5 2" fill="none" stroke="#0d6e0d" stroke-width="2.4" stroke-linecap="round" stroke-linejoin="round"/></svg>
<svg class="a" style="left:240.00px;top:307.80px;" width="12.0" height="10.0" viewBox="0 0 12 10"><path d="M1.5 5.2 4.5 8.2 10.5 2" fill="none" stroke="#0d6e0d" stroke-width="2.4" stroke-linecap="round" stroke-linejoin="round"/></svg>
<div class="t" style="top:308.28px;font-size:10.3px;line-height:10.3px;color:#333;left:260.25px;transform:scaleX(0.94);transform-origin:left 0;-webkit-text-stroke:0.2px #333;">OPTIONAL1</div>
<div class="t" style="top:308.28px;font-size:10.3px;line-height:10.3px;color:#333;left:415.40px;transform:scaleX(0.94);transform-origin:left 0;-webkit-text-stroke:0.2px #333;">Color = red not b...</div>
<div class="t" style="top:308.28px;font-size:10.3px;line-height:10.3px;color:#333;left:506.50px;transform:scaleX(0.94);transform-origin:left 0;-webkit-text-stroke:0.2px #333;">Transit...</div>
<div class="t" style="top:308.28px;font-size:10.3px;line-height:10.3px;color:#333;left:551.70px;transform:scaleX(0.94);transform-origin:left 0;-webkit-text-stroke:0.2px #333;">Color = red / Colo...</div>
<div class="t" style="top:308.28px;font-size:10.3px;line-height:10.3px;color:#333;left:280.90px;width:400px;text-align:right;transform:scaleX(0.94);transform-origin:right 0;-webkit-text-stroke:0.2px #333;">0</div>
<div class="t" style="top:308.28px;font-size:10.3px;line-height:10.3px;color:#333;left:326.80px;width:400px;text-align:right;transform:scaleX(0.94);transform-origin:right 0;-webkit-text-stroke:0.2px #333;">0</div>
<div class="t" style="top:308.28px;font-size:10.3px;line-height:10.3px;color:#333;left:589.40px;width:400px;text-align:right;transform:scaleX(0.94);transform-origin:right 0;-webkit-text-stroke:0.2px #333;">0</div>
<div class="t" style="top:308.28px;font-size:10.3px;line-height:10.3px;color:#333;left:630.70px;width:400px;text-align:right;transform:scaleX(0.94);transform-origin:right 0;-webkit-text-stroke:0.2px #333;">0</div>
<div class="t" style="top:308.28px;font-size:10.3px;line-height:10.3px;color:#333;left:758.20px;width:400px;text-align:right;transform:scaleX(0.94);transform-origin:right 0;-webkit-text-stroke:0.2px #333;">0</div>
<div class="t" style="top:308.28px;font-size:10.3px;line-height:10.3px;color:#333;left:804.10px;width:400px;text-align:right;transform:scaleX(0.94);transform-origin:right 0;-webkit-text-stroke:0.2px #333;">NaN</div>
<div class="t" style="top:308.28px;font-size:10.3px;line-height:10.3px;color:#333;left:1210.70px;transform:scaleX(0.94);transform-origin:left 0;-webkit-text-stroke:0.2px #333;">NaN</div>
<div class="t" style="top:325.53px;font-size:10.3px;line-height:10.3px;color:#333;left:98.50px;transform:scaleX(0.94);transform-origin:left 0;-webkit-text-stroke:0.2px #333;">Uniform Phone0</div>
<svg class="a" style="left:217.50px;top:325.05px;" width="12.0" height="10.0" viewBox="0 0 12 10"><path d="M1.5 5.2 4.5 8.2 10.5 2" fill="none" stroke="#0d6e0d" stroke-width="2.4" stroke-linecap="round" stroke-linejoin="round"/></svg>
<svg class="a" style="left:240.00px;top:325.05px;" width="12.0" height="10.0" viewBox="0 0 12 10"><path d="M1.5 5.2 4.5 8.2 10.5 2" fill="none" stroke="#0d6e0d" stroke-width="2.4" stroke-linecap="round" stroke-linejoin="round"/></svg>
<div class="t" style="top:325.53px;font-size:10.3px;line-height:10.3px;color:#333;left:260.25px;transform:scaleX(0.94);transform-origin:left 0;-webkit-text-stroke:0.2px #333;">OPTIONAL1</div>
<div class="t" style="top:325.53px;font-size:10.3px;line-height:10.3px;color:#333;left:415.40px;transform:scaleX(0.94);transform-origin:left 0;-webkit-text-stroke:0.2px #333;">Max deviation: -0 ...</div>
<div class="t" style="top:325.53px;font-size:10.3px;line-height:10.3px;color:#333;left:506.50px;transform:scaleX(0.94);transform-origin:left 0;-webkit-text-stroke:0.2px #333;">Unifor...</div>
<div class="t" style="top:325.53px;font-size:10.3px;line-height:10.3px;color:#333;left:551.70px;transform:scaleX(0.94);transform-origin:left 0;-webkit-text-stroke:0.2px #333;">Phone = true</div>
<div class="t" style="top:325.53px;font-size:10.3px;line-height:10.3px;color:#333;left:280.90px;width:400px;text-align:right;transform:scaleX(0.94);transform-origin:right 0;-webkit-text-stroke:0.2px #333;">0</div>
<div class="t" style="top:325.53px;font-size:10.3px;line-height:10.3px;color:#333;left:326.80px;width:400px;text-align:right;transform:scaleX(0.94);transform-origin:right 0;-webkit-text-stroke:0.2px #333;">0</div>
<div class="t" style="top:325.53px;font-size:10.3px;line-height:10.3px;color:#333;left:589.40px;width:400px;text-align:right;transform:scaleX(0.94);transform-origin:right 0;-webkit-text-stroke:0.2px #333;">0</div>
<div class="t" style="top:325.53px;font-size:10.3px;line-height:10.3px;color:#333;left:630.70px;width:400px;text-align:right;transform:scaleX(0.94);transform-origin:right 0;-webkit-text-stroke:0.2px #333;">0</div>
<div class="t" style="top:325.53px;font-size:10.3px;line-height:10.3px;color:#333;left:758.20px;width:400px;text-align:right;transform:scaleX(0.94);transform-origin:right 0;-webkit-text-stroke:0.2px #333;">0</div>
<div class="t" style="top:325.53px;font-size:10.3px;line-height:10.3px;color:#333;left:804.10px;width:400px;text-align:right;transform:scaleX(0.94);transform-origin:right 0;-webkit-text-stroke:0.2px #333;">NaN</div>
<div class="t" style="top:325.53px;font-size:10.3px;line-height:10.3px;color:#333;left:1210.70px;transform:scaleX(0.94);transform-origin:left 0;-webkit-text-stroke:0.2px #333;">NaN</div>
<div class="a" style="left:1257.00px;top:235.00px;width:15.50px;height:103.30px;background:#f4f4f4;"></div>
<svg class="a" style="left:1261.50px;top:242.50px;" width="7" height="4.2" viewBox="0 0 7 4.2"><path d="M0 4.2 3.5 0 7 4.2" fill="none" stroke="#9a9a9a" stroke-width="1.2"/></svg>
<svg class="a" style="left:1261.50px;top:330.50px;" width="7" height="4.2" viewBox="0 0 7 4.2"><path d="M0 0 3.5 4.2 7 0" fill="none" stroke="#9a9a9a" stroke-width="1.2"/></svg>
<div class="a" style="left:1117.00px;top:338.30px;width:139.00px;height:15.45px;background:#f1f1f1;"></div>
<svg class="a" style="left:1122.00px;top:342.50px;" width="3.9" height="6.5" viewBox="0 0 3.9 6.5"><path d="M3.9 0 0 3.25 3.9 6.5" fill="none" stroke="#222" stroke-width="1.9"/></svg>
<div class="a" style="left:1132.60px;top:340.00px;width:23.40px;height:12.50px;background:#c9c9c9;"></div>
<svg class="a" style="left:1248.00px;top:342.50px;" width="3.9" height="6.5" viewBox="0 0 3.9 6.5"><path d="M0 0 3.9 3.25 0 6.5" fill="none" stroke="#222" stroke-width="1.9"/></svg>
<div class="a" style="left:41.00px;top:354.30px;width:1231.50px;height:1.40px;background:#d0d0d0;"></div>
<div class="a" style="left:36.50px;top:79.00px;width:1.10px;height:745.00px;background:#eeeeee;"></div>
<div class="a" style="left:40.20px;top:85.00px;width:1.00px;height:270.00px;background:#dadada;"></div>
<div class="a" style="left:41.00px;top:363.00px;width:612.50px;height:457.00px;background:#ffffff;"></div>
<div class="a" style="left:41.00px;top:819.30px;width:612.50px;height:1.40px;background:#d0d0d0;"></div>
<div class="a" style="left:40.20px;top:363.00px;width:1.00px;height:457.00px;background:#dadada;"></div>
<div class="t" style="top:371.00px;font-size:13px;line-height:13px;color:#222;left:50.50px;transform:scaleX(0.9733);transform-origin:left 0;-webkit-text-stroke:0.3px #222;">Sequenced orders</div>
<svg class="a" style="left:329.00px;top:373.50px;" width="9" height="7" viewBox="0 0 9 7"><g ><path d="M0.8 3.5H8.5" stroke="#aaaaaa" stroke-width="1.2"/><path d="M3.5 0.8 0.8 3.5 3.5 6.2" fill="none" stroke="#aaaaaa" stroke-width="1.2"/></g></svg>
<svg class="a" style="left:346.00px;top:375.50px;" width="6" height="4" viewBox="0 0 6 4"><path d="M0 0H6L3.0 3.5Z" fill="#aaaaaa"/></svg>
<svg class="a" style="left:365.50px;top:373.50px;" width="9" height="7" viewBox="0 0 9 7"><g transform="translate(9,0) scale(-1,1)"><path d="M0.8 3.5H8.5" stroke="#aaaaaa" stroke-width="1.2"/><path d="M3.5 0.8 0.8 3.5 3.5 6.2" fill="none" stroke="#aaaaaa" stroke-width="1.2"/></g></svg>
<svg class="a" style="left:384.00px;top:375.50px;" width="6" height="4" viewBox="0 0 6 4"><path d="M0 0H6L3.0 3.5Z" fill="#aaaaaa"/></svg>
<div class="t" style="top:371.93px;font-size:11.3px;line-height:11.3px;color:#333;left:403.20px;transform:scaleX(1.0201);transform-origin:left 0;-webkit-text-stroke:0.2px #333;">Actions</div>
<svg class="a" style="left:448.00px;top:375.50px;" width="6" height="4" viewBox="0 0 6 4"><path d="M0 0H6L3.0 3.5Z" fill="#333"/></svg>
<svg class="a" style="left:467.80px;top:371.80px;" width="10" height="10" viewBox="0 0 10 10"><path d="M0.5 0.5H8L9.5 2V9.5H0.5Z" fill="none" stroke="#333" stroke-width="1.3"/><rect x="2.3" y="0.8" width="4.6" height="3" fill="#333"/><rect x="2.3" y="6" width="5.4" height="3.5" fill="#333"/></svg>
<svg class="a" style="left:490.00px;top:371.50px;" width="12" height="10" viewBox="0 0 12 10"><path d="M0.5 2V9.5H9.5L11.5 5H3L1 9" fill="#333"/><path d="M0.5 2V1H4L5 2H9V4" fill="none" stroke="#333" stroke-width="1"/><path d="M0.5 1.5H4L5 2.5H9.5V5H2.5L0.5 9.5Z" fill="#333"/></svg>
<svg class="a" style="left:516.00px;top:371.00px;" width="9" height="12" viewBox="0 0 9 12"><rect x="0.2" y="1.2" width="8.6" height="1.4" fill="#777"/><rect x="3" y="0" width="3" height="1.4" fill="#777"/><rect x="1" y="3.2" width="7" height="8.5" fill="#777"/><path d="M2.8 4.3V10.7M4.5 4.3V10.7M6.2 4.3V10.7" stroke="#fff" stroke-width="0.5"/></svg>
<svg class="a" style="left:539.00px;top:372.00px;" width="10.8" height="10.8" viewBox="0 0 10.8 10.8"><path d="M9.13 4.25 L10.73 4.54 L10.73 6.26 L9.13 6.55 L8.85 7.22 L9.78 8.56 L8.56 9.78 L7.22 8.85 L6.55 9.13 L6.26 10.73 L4.54 10.73 L4.25 9.13 L3.58 8.85 L2.24 9.78 L1.02 8.56 L1.95 7.22 L1.67 6.55 L0.07 6.26 L0.07 4.54 L1.67 4.25 L1.95 3.58 L1.02 2.24 L2.24 1.02 L3.58 1.95 L4.25 1.67 L4.54 0.07 L6.26 0.07 L6.55 1.67 L7.22 1.95 L8.56 1.02 L9.78 2.24 L8.85 3.58Z" fill="#222"/><circle cx="5.4" cy="5.4" r="3.9" fill="#222"/><circle cx="5.4" cy="5.4" r="1.9" fill="#fff"/></svg>
<svg class="a" style="left:560.60px;top:371.00px;" width="15" height="12" viewBox="0 0 15 12"><g fill="#222"><rect x="0.5" y="0" width="2" height="2"/><rect x="0.5" y="5" width="2" height="2"/><rect x="0.5" y="10" width="2" height="2"/><rect x="12.5" y="5" width="2" height="2"/></g><path d="M4.5 0.5Q7.5 0.5 7.5 3V4.5L9 6 7.5 7.5V9Q7.5 11.5 4.5 11.5" fill="none" stroke="#222" stroke-width="1.3"/></svg>
<svg class="a" style="left:587.00px;top:372.00px;" width="10" height="10" viewBox="0 0 10 10"><path d="M0 0.5H10L6.2 5V10L3.8 8.5V5Z" fill="#222"/></svg>
<div class="a" style="left:609.60px;top:376.20px;width:10.50px;height:1.30px;background:#555;"></div>
<div class="a" style="left:633.50px;top:372.40px;width:9.60px;height:9.60px;border:1.3px solid #555;box-sizing:border-box;border-radius:1.2px;"></div>
<div class="a" style="left:41.00px;top:390.00px;width:612.50px;height:19.30px;background:#f3f3f3;"></div>
<div class="a" style="left:41.00px;top:389.50px;width:612.50px;height:1.00px;background:#d9d9d9;"></div>
<div class="a" style="left:41.00px;top:408.60px;width:612.50px;height:1.40px;background:#cfcfcf;"></div>
<div class="a" style="left:80.00px;top:390.00px;width:1.00px;height:19.30px;background:#d2d2d2;"></div>
<div class="a" style="left:103.00px;top:390.00px;width:1.00px;height:19.30px;background:#d2d2d2;"></div>
<div class="a" style="left:193.75px;top:390.00px;width:1.00px;height:19.30px;background:#d2d2d2;"></div>
<div class="a" style="left:284.75px;top:390.00px;width:1.00px;height:19.30px;background:#d2d2d2;"></div>
<div class="a" style="left:376.00px;top:390.00px;width:1.00px;height:19.30px;background:#d2d2d2;"></div>
<div class="a" style="left:467.10px;top:390.00px;width:1.00px;height:19.30px;background:#d2d2d2;"></div>
<div class="a" style="left:558.00px;top:390.00px;width:1.00px;height:19.30px;background:#d2d2d2;"></div>
<div class="t" style="top:396.98px;font-size:10.3px;line-height:10.3px;color:#333;left:47.00px;transform:scaleX(0.96);transform-origin:left 0;-webkit-text-stroke:0.35px #333;">50</div>
<div class="a" style="left:63.00px;top:394.00px;width:12.60px;height:12.60px;background:#fff;border:1px solid #cfcfcf;box-sizing:border-box;border-radius:1.5px;"></div>
<div class="a" style="left:81px;top:391px;width:21.5px;height:18px;overflow:hidden">
<div class="t" style="top:5.90px;font-size:10.4px;line-height:10.4px;color:#333;left:2.50px;transform:scaleX(0.8812);transform-origin:left 0;font-weight:bold;">Violations</div>
</div>
<div class="t" style="top:396.90px;font-size:10.4px;line-height:10.4px;color:#333;left:-1.12px;width:300px;text-align:center;transform:scaleX(0.8992);transform-origin:center 0;font-weight:bold;">Sequence position</div>
<div class="t" style="top:396.90px;font-size:10.4px;line-height:10.4px;color:#333;left:89.75px;width:300px;text-align:center;transform:scaleX(0.8726);transform-origin:center 0;font-weight:bold;">History position</div>
<div class="t" style="top:396.90px;font-size:10.4px;line-height:10.4px;color:#333;left:180.88px;width:300px;text-align:center;transform:scaleX(0.9234);transform-origin:center 0;font-weight:bold;">Order name</div>
<div class="t" style="top:396.90px;font-size:10.4px;line-height:10.4px;color:#333;left:272.05px;width:300px;text-align:center;transform:scaleX(0.9075);transform-origin:center 0;font-weight:bold;">Engine</div>
<div class="t" style="top:396.90px;font-size:10.4px;line-height:10.4px;color:#333;left:363.05px;width:300px;text-align:center;transform:scaleX(0.8889);transform-origin:center 0;font-weight:bold;">Color</div>
<div class="t" style="top:396.90px;font-size:10.4px;line-height:10.4px;color:#333;left:454.00px;width:300px;text-align:center;transform:scaleX(0.9188);transform-origin:center 0;font-weight:bold;">Phone</div>
<div class="a" style="left:41px;top:410px;width:598px;height:394px;overflow:hidden">
<div class="a" style="left:0.00px;top:0.00px;width:39.50px;height:17.30px;background:#f3f3f3;"></div>
<div class="a" style="left:62.50px;top:0.00px;width:181.75px;height:17.30px;background:#cddff8;"></div>
<div class="a" style="left:43.00px;top:1.80px;width:16.50px;height:13.70px;background:#dedede;border-radius:2px;"></div>
<div class="a" style="left:22.00px;top:2.20px;width:12.50px;height:12.50px;background:#fff;border:1px solid #cfcfcf;box-sizing:border-box;border-radius:1.5px;"></div>
<div class="a" style="left:0.00px;top:16.80px;width:612.50px;height:1.00px;background:#e8e8e8;"></div>
<div class="a" style="left:426.60px;top:0.00px;width:90.90px;height:17.90px;background:#8080ff;"></div>
<div class="t" style="top:4.38px;font-size:10.3px;line-height:10.3px;color:#333;left:-382.50px;width:400px;text-align:right;transform:scaleX(0.96);transform-origin:right 0;-webkit-text-stroke:0.2px #333;">1</div>
<div class="t" style="top:4.68px;font-size:10.3px;line-height:10.3px;color:#333;left:65.50px;transform:scaleX(0.94);transform-origin:left 0;-webkit-text-stroke:0.2px #333;">-1</div>
<div class="t" style="top:4.68px;font-size:10.3px;line-height:10.3px;color:#333;left:156.50px;transform:scaleX(0.94);transform-origin:left 0;-webkit-text-stroke:0.2px #333;">197</div>
<div class="t" style="top:4.68px;font-size:10.3px;line-height:10.3px;color:#333;left:247.70px;transform:scaleX(0.94);transform-origin:left 0;-webkit-text-stroke:0.2px #333;">Order 9581</div>
<div class="t" style="top:4.68px;font-size:10.3px;line-height:10.3px;color:#333;left:338.70px;transform:scaleX(0.94);transform-origin:left 0;-webkit-text-stroke:0.2px #333;">AG 220X</div>
<div class="t" style="top:4.68px;font-size:10.3px;line-height:10.3px;color:#fff;left:447.70px;transform:scaleX(0.94);transform-origin:left 0;-webkit-text-stroke:0.2px #fff;">blue</div>
<div class="a" style="left:0.00px;top:17.30px;width:39.50px;height:17.30px;background:#f3f3f3;"></div>
<div class="a" style="left:62.50px;top:17.30px;width:181.75px;height:17.30px;background:#cddff8;"></div>
<div class="a" style="left:43.00px;top:19.10px;width:16.50px;height:13.70px;background:#dedede;border-radius:2px;"></div>
<div class="a" style="left:22.00px;top:19.50px;width:12.50px;height:12.50px;background:#fff;border:1px solid #cfcfcf;box-sizing:border-box;border-radius:1.5px;"></div>
<div class="a" style="left:0.00px;top:34.10px;width:612.50px;height:1.00px;background:#e8e8e8;"></div>
<div class="a" style="left:426.60px;top:17.30px;width:90.90px;height:17.90px;background:#000;"></div>
<div class="t" style="top:21.68px;font-size:10.3px;line-height:10.3px;color:#333;left:-382.50px;width:400px;text-align:right;transform:scaleX(0.96);transform-origin:right 0;-webkit-text-stroke:0.2px #333;">2</div>
<div class="t" style="top:21.98px;font-size:10.3px;line-height:10.3px;color:#333;left:65.50px;transform:scaleX(0.94);transform-origin:left 0;-webkit-text-stroke:0.2px #333;">-1</div>
<div class="t" style="top:21.98px;font-size:10.3px;line-height:10.3px;color:#333;left:156.50px;transform:scaleX(0.94);transform-origin:left 0;-webkit-text-stroke:0.2px #333;">198</div>
<div class="t" style="top:21.98px;font-size:10.3px;line-height:10.3px;color:#333;left:247.70px;transform:scaleX(0.94);transform-origin:left 0;-webkit-text-stroke:0.2px #333;">Order 17078</div>
<div class="t" style="top:21.98px;font-size:10.3px;line-height:10.3px;color:#333;left:338.70px;transform:scaleX(0.94);transform-origin:left 0;-webkit-text-stroke:0.2px #333;">AG 220X</div>
<div class="t" style="top:21.98px;font-size:10.3px;line-height:10.3px;color:#fff;left:447.70px;transform:scaleX(0.94);transform-origin:left 0;-webkit-text-stroke:0.2px #fff;">black</div>
<svg class="a" style="left:562.30px;top:21.20px;" width="12.0" height="10.0" viewBox="0 0 12 10"><path d="M1.5 5.2 4.5 8.2 10.5 2" fill="none" stroke="#0d6e0d" stroke-width="2.4" stroke-linecap="round" stroke-linejoin="round"/></svg>
<div class="a" style="left:0.00px;top:34.60px;width:39.50px;height:17.30px;background:#f3f3f3;"></div>
<div class="a" style="left:62.50px;top:34.60px;width:181.75px;height:17.30px;background:#cddff8;"></div>
<div class="a" style="left:43.00px;top:36.40px;width:16.50px;height:13.70px;background:#dedede;border-radius:2px;"></div>
<div class="a" style="left:22.00px;top:36.80px;width:12.50px;height:12.50px;background:#fff;border:1px solid #cfcfcf;box-sizing:border-box;border-radius:1.5px;"></div>
<div class="a" style="left:0.00px;top:51.40px;width:612.50px;height:1.00px;background:#e8e8e8;"></div>
<div class="a" style="left:426.60px;top:34.60px;width:90.90px;height:17.90px;background:#8080ff;"></div>
<div class="t" style="top:38.98px;font-size:10.3px;line-height:10.3px;color:#333;left:-382.50px;width:400px;text-align:right;transform:scaleX(0.96);transform-origin:right 0;-webkit-text-stroke:0.2px #333;">3</div>
<div class="t" style="top:39.28px;font-size:10.3px;line-height:10.3px;color:#333;left:65.50px;transform:scaleX(0.94);transform-origin:left 0;-webkit-text-stroke:0.2px #333;">-1</div>
<div class="t" style="top:39.28px;font-size:10.3px;line-height:10.3px;color:#333;left:156.50px;transform:scaleX(0.94);transform-origin:left 0;-webkit-text-stroke:0.2px #333;">199</div>
<div class="t" style="top:39.28px;font-size:10.3px;line-height:10.3px;color:#333;left:247.70px;transform:scaleX(0.94);transform-origin:left 0;-webkit-text-stroke:0.2px #333;">Order 9948</div>
<div class="t" style="top:39.28px;font-size:10.3px;line-height:10.3px;color:#333;left:338.70px;transform:scaleX(0.94);transform-origin:left 0;-webkit-text-stroke:0.2px #333;">BG 260X</div>
<div class="t" style="top:39.28px;font-size:10.3px;line-height:10.3px;color:#fff;left:447.70px;transform:scaleX(0.94);transform-origin:left 0;-webkit-text-stroke:0.2px #fff;">blue</div>
<div class="a" style="left:0.00px;top:51.90px;width:39.50px;height:17.30px;background:#f3f3f3;"></div>
<div class="a" style="left:62.50px;top:51.90px;width:181.75px;height:17.30px;background:#cddff8;"></div>
<div class="a" style="left:43.00px;top:53.70px;width:16.50px;height:13.70px;background:#dedede;border-radius:2px;"></div>
<div class="a" style="left:22.00px;top:54.10px;width:12.50px;height:12.50px;background:#fff;border:1px solid #cfcfcf;box-sizing:border-box;border-radius:1.5px;"></div>
<div class="a" style="left:0.00px;top:68.70px;width:612.50px;height:1.00px;background:#e8e8e8;"></div>
<div class="a" style="left:426.60px;top:51.90px;width:90.90px;height:17.90px;background:#000;"></div>
<div class="t" style="top:56.28px;font-size:10.3px;line-height:10.3px;color:#333;left:-382.50px;width:400px;text-align:right;transform:scaleX(0.96);transform-origin:right 0;-webkit-text-stroke:0.2px #333;">4</div>
<div class="t" style="top:56.58px;font-size:10.3px;line-height:10.3px;color:#333;left:65.50px;transform:scaleX(0.94);transform-origin:left 0;-webkit-text-stroke:0.2px #333;">-1</div>
<div class="t" style="top:56.58px;font-size:10.3px;line-height:10.3px;color:#333;left:156.50px;transform:scaleX(0.94);transform-origin:left 0;-webkit-text-stroke:0.2px #333;">200</div>
<div class="t" style="top:56.58px;font-size:10.3px;line-height:10.3px;color:#333;left:247.70px;transform:scaleX(0.94);transform-origin:left 0;-webkit-text-stroke:0.2px #333;">Order 17168</div>
<div class="t" style="top:56.58px;font-size:10.3px;line-height:10.3px;color:#333;left:338.70px;transform:scaleX(0.94);transform-origin:left 0;-webkit-text-stroke:0.2px #333;">AG 175D</div>
<div class="t" style="top:56.58px;font-size:10.3px;line-height:10.3px;color:#fff;left:447.70px;transform:scaleX(0.94);transform-origin:left 0;-webkit-text-stroke:0.2px #fff;">black</div>
<svg class="a" style="left:562.30px;top:55.80px;" width="12.0" height="10.0" viewBox="0 0 12 10"><path d="M1.5 5.2 4.5 8.2 10.5 2" fill="none" stroke="#0d6e0d" stroke-width="2.4" stroke-linecap="round" stroke-linejoin="round"/></svg>
<div class="a" style="left:0.00px;top:69.20px;width:39.50px;height:17.30px;background:#f3f3f3;"></div>
<div class="a" style="left:62.50px;top:69.20px;width:181.75px;height:17.30px;background:#cddff8;"></div>
<div class="a" style="left:43.00px;top:71.00px;width:16.50px;height:13.70px;background:#dedede;border-radius:2px;"></div>
<div class="a" style="left:22.00px;top:71.40px;width:12.50px;height:12.50px;background:#fff;border:1px solid #cfcfcf;box-sizing:border-box;border-radius:1.5px;"></div>
<div class="a" style="left:0.00px;top:86.00px;width:612.50px;height:1.00px;background:#e8e8e8;"></div>
<div class="a" style="left:426.60px;top:69.20px;width:90.90px;height:17.90px;background:#8080ff;"></div>
<div class="t" style="top:73.58px;font-size:10.3px;line-height:10.3px;color:#333;left:-382.50px;width:400px;text-align:right;transform:scaleX(0.96);transform-origin:right 0;-webkit-text-stroke:0.2px #333;">5</div>
<div class="t" style="top:73.88px;font-size:10.3px;line-height:10.3px;color:#333;left:65.50px;transform:scaleX(0.94);transform-origin:left 0;-webkit-text-stroke:0.2px #333;">-1</div>
<div class="t" style="top:73.88px;font-size:10.3px;line-height:10.3px;color:#333;left:156.50px;transform:scaleX(0.94);transform-origin:left 0;-webkit-text-stroke:0.2px #333;">201</div>
<div class="t" style="top:73.88px;font-size:10.3px;line-height:10.3px;color:#333;left:247.70px;transform:scaleX(0.94);transform-origin:left 0;-webkit-text-stroke:0.2px #333;">Order 11479</div>
<div class="t" style="top:73.88px;font-size:10.3px;line-height:10.3px;color:#333;left:338.70px;transform:scaleX(0.94);transform-origin:left 0;-webkit-text-stroke:0.2px #333;">AG 220X</div>
<div class="t" style="top:73.88px;font-size:10.3px;line-height:10.3px;color:#fff;left:447.70px;transform:scaleX(0.94);transform-origin:left 0;-webkit-text-stroke:0.2px #fff;">blue</div>
<div class="a" style="left:0.00px;top:86.50px;width:39.50px;height:17.30px;background:#f3f3f3;"></div>
<div class="a" style="left:62.50px;top:86.50px;width:181.75px;height:17.30px;background:#cddff8;"></div>
<div class="a" style="left:43.00px;top:88.30px;width:16.50px;height:13.70px;background:#dedede;border-radius:2px;"></div>
<div class="a" style="left:22.00px;top:88.70px;width:12.50px;height:12.50px;background:#fff;border:1px solid #cfcfcf;box-sizing:border-box;border-radius:1.5px;"></div>
<div class="a" style="left:0.00px;top:103.30px;width:612.50px;height:1.00px;background:#e8e8e8;"></div>
<div class="a" style="left:426.60px;top:86.50px;width:90.90px;height:17.90px;background:#000;"></div>
<div class="t" style="top:90.88px;font-size:10.3px;line-height:10.3px;color:#333;left:-382.50px;width:400px;text-align:right;transform:scaleX(0.96);transform-origin:right 0;-webkit-text-stroke:0.2px #333;">6</div>
<div class="t" style="top:91.18px;font-size:10.3px;line-height:10.3px;color:#333;left:65.50px;transform:scaleX(0.94);transform-origin:left 0;-webkit-text-stroke:0.2px #333;">-1</div>
<div class="t" style="top:91.18px;font-size:10.3px;line-height:10.3px;color:#333;left:156.50px;transform:scaleX(0.94);transform-origin:left 0;-webkit-text-stroke:0.2px #333;">202</div>
<div class="t" style="top:91.18px;font-size:10.3px;line-height:10.3px;color:#333;left:247.70px;transform:scaleX(0.94);transform-origin:left 0;-webkit-text-stroke:0.2px #333;">Order 18101</div>
<div class="t" style="top:91.18px;font-size:10.3px;line-height:10.3px;color:#333;left:338.70px;transform:scaleX(0.94);transform-origin:left 0;-webkit-text-stroke:0.2px #333;">BG 260X</div>
<div class="t" style="top:91.18px;font-size:10.3px;line-height:10.3px;color:#fff;left:447.70px;transform:scaleX(0.94);transform-origin:left 0;-webkit-text-stroke:0.2px #fff;">black</div>
<svg class="a" style="left:562.30px;top:90.40px;" width="12.0" height="10.0" viewBox="0 0 12 10"><path d="M1.5 5.2 4.5 8.2 10.5 2" fill="none" stroke="#0d6e0d" stroke-width="2.4" stroke-linecap="round" stroke-linejoin="round"/></svg>
<div class="a" style="left:0.00px;top:103.80px;width:39.50px;height:17.30px;background:#f3f3f3;"></div>
<div class="a" style="left:62.50px;top:103.80px;width:181.75px;height:17.30px;background:#cddff8;"></div>
<div class="a" style="left:43.00px;top:105.60px;width:16.50px;height:13.70px;background:#dedede;border-radius:2px;"></div>
<div class="a" style="left:22.00px;top:106.00px;width:12.50px;height:12.50px;background:#fff;border:1px solid #cfcfcf;box-sizing:border-box;border-radius:1.5px;"></div>
<div class="a" style="left:0.00px;top:120.60px;width:612.50px;height:1.00px;background:#e8e8e8;"></div>
<div class="a" style="left:426.60px;top:103.80px;width:90.90px;height:17.90px;background:#8080ff;"></div>
<div class="t" style="top:108.18px;font-size:10.3px;line-height:10.3px;color:#333;left:-382.50px;width:400px;text-align:right;transform:scaleX(0.96);transform-origin:right 0;-webkit-text-stroke:0.2px #333;">7</div>
<div class="t" style="top:108.48px;font-size:10.3px;line-height:10.3px;color:#333;left:65.50px;transform:scaleX(0.94);transform-origin:left 0;-webkit-text-stroke:0.2px #333;">-1</div>
<div class="t" style="top:108.48px;font-size:10.3px;line-height:10.3px;color:#333;left:156.50px;transform:scaleX(0.94);transform-origin:left 0;-webkit-text-stroke:0.2px #333;">203</div>
<div class="t" style="top:108.48px;font-size:10.3px;line-height:10.3px;color:#333;left:247.70px;transform:scaleX(0.94);transform-origin:left 0;-webkit-text-stroke:0.2px #333;">Order 11739</div>
<div class="t" style="top:108.48px;font-size:10.3px;line-height:10.3px;color:#333;left:338.70px;transform:scaleX(0.94);transform-origin:left 0;-webkit-text-stroke:0.2px #333;">AG 175D</div>
<div class="t" style="top:108.48px;font-size:10.3px;line-height:10.3px;color:#fff;left:447.70px;transform:scaleX(0.94);transform-origin:left 0;-webkit-text-stroke:0.2px #fff;">blue</div>
<div class="a" style="left:0.00px;top:121.10px;width:39.50px;height:17.30px;background:#f3f3f3;"></div>
<div class="a" style="left:62.50px;top:121.10px;width:181.75px;height:17.30px;background:#cddff8;"></div>
<div class="a" style="left:43.00px;top:122.90px;width:16.50px;height:13.70px;background:#dedede;border-radius:2px;"></div>
<div class="a" style="left:22.00px;top:123.30px;width:12.50px;height:12.50px;background:#fff;border:1px solid #cfcfcf;box-sizing:border-box;border-radius:1.5px;"></div>
<div class="a" style="left:0.00px;top:137.90px;width:612.50px;height:1.00px;background:#e8e8e8;"></div>
<div class="a" style="left:426.60px;top:121.10px;width:90.90px;height:17.90px;background:#000;"></div>
<div class="t" style="top:125.48px;font-size:10.3px;line-height:10.3px;color:#333;left:-382.50px;width:400px;text-align:right;transform:scaleX(0.96);transform-origin:right 0;-webkit-text-stroke:0.2px #333;">8</div>
<div class="t" style="top:125.78px;font-size:10.3px;line-height:10.3px;color:#333;left:65.50px;transform:scaleX(0.94);transform-origin:left 0;-webkit-text-stroke:0.2px #333;">-1</div>
<div class="t" style="top:125.78px;font-size:10.3px;line-height:10.3px;color:#333;left:156.50px;transform:scaleX(0.94);transform-origin:left 0;-webkit-text-stroke:0.2px #333;">204</div>
<div class="t" style="top:125.78px;font-size:10.3px;line-height:10.3px;color:#333;left:247.70px;transform:scaleX(0.94);transform-origin:left 0;-webkit-text-stroke:0.2px #333;">Order 18911</div>
<div class="t" style="top:125.78px;font-size:10.3px;line-height:10.3px;color:#333;left:338.70px;transform:scaleX(0.94);transform-origin:left 0;-webkit-text-stroke:0.2px #333;">AG 175D</div>
<div class="t" style="top:125.78px;font-size:10.3px;line-height:10.3px;color:#fff;left:447.70px;transform:scaleX(0.94);transform-origin:left 0;-webkit-text-stroke:0.2px #fff;">black</div>
<svg class="a" style="left:562.30px;top:125.00px;" width="12.0" height="10.0" viewBox="0 0 12 10"><path d="M1.5 5.2 4.5 8.2 10.5 2" fill="none" stroke="#0d6e0d" stroke-width="2.4" stroke-linecap="round" stroke-linejoin="round"/></svg>
<div class="a" style="left:0.00px;top:138.40px;width:39.50px;height:17.30px;background:#f3f3f3;"></div>
<div class="a" style="left:62.50px;top:138.40px;width:181.75px;height:17.30px;background:#cddff8;"></div>
<div class="a" style="left:43.00px;top:140.20px;width:16.50px;height:13.70px;background:#dedede;border-radius:2px;"></div>
<div class="a" style="left:22.00px;top:140.60px;width:12.50px;height:12.50px;background:#fff;border:1px solid #cfcfcf;box-sizing:border-box;border-radius:1.5px;"></div>
<div class="a" style="left:0.00px;top:155.20px;width:612.50px;height:1.00px;background:#e8e8e8;"></div>
<div class="a" style="left:426.60px;top:138.40px;width:90.90px;height:17.90px;background:#8080ff;"></div>
<div class="t" style="top:142.78px;font-size:10.3px;line-height:10.3px;color:#333;left:-382.50px;width:400px;text-align:right;transform:scaleX(0.96);transform-origin:right 0;-webkit-text-stroke:0.2px #333;">9</div>
<div class="t" style="top:143.08px;font-size:10.3px;line-height:10.3px;color:#333;left:65.50px;transform:scaleX(0.94);transform-origin:left 0;-webkit-text-stroke:0.2px #333;">-1</div>
<div class="t" style="top:143.08px;font-size:10.3px;line-height:10.3px;color:#333;left:156.50px;transform:scaleX(0.94);transform-origin:left 0;-webkit-text-stroke:0.2px #333;">205</div>
<div class="t" style="top:143.08px;font-size:10.3px;line-height:10.3px;color:#333;left:247.70px;transform:scaleX(0.94);transform-origin:left 0;-webkit-text-stroke:0.2px #333;">Order 12432</div>
<div class="t" style="top:143.08px;font-size:10.3px;line-height:10.3px;color:#333;left:338.70px;transform:scaleX(0.94);transform-origin:left 0;-webkit-text-stroke:0.2px #333;">BG 260X</div>
<div class="t" style="top:143.08px;font-size:10.3px;line-height:10.3px;color:#fff;left:447.70px;transform:scaleX(0.94);transform-origin:left 0;-webkit-text-stroke:0.2px #fff;">blue</div>
<div class="a" style="left:0.00px;top:155.70px;width:39.50px;height:17.30px;background:#f3f3f3;"></div>
<div class="a" style="left:62.50px;top:155.70px;width:181.75px;height:17.30px;background:#cddff8;"></div>
<div class="a" style="left:43.00px;top:157.50px;width:16.50px;height:13.70px;background:#dedede;border-radius:2px;"></div>
<div class="a" style="left:22.00px;top:157.90px;width:12.50px;height:12.50px;background:#fff;border:1px solid #cfcfcf;box-sizing:border-box;border-radius:1.5px;"></div>
<div class="a" style="left:0.00px;top:172.50px;width:612.50px;height:1.00px;background:#e8e8e8;"></div>
<div class="a" style="left:426.60px;top:155.70px;width:90.90px;height:17.90px;background:#000;"></div>
<div class="t" style="top:160.08px;font-size:10.3px;line-height:10.3px;color:#333;left:-382.50px;width:400px;text-align:right;transform:scaleX(0.96);transform-origin:right 0;-webkit-text-stroke:0.2px #333;">10</div>
<div class="t" style="top:160.38px;font-size:10.3px;line-height:10.3px;color:#333;left:65.50px;transform:scaleX(0.94);transform-origin:left 0;-webkit-text-stroke:0.2px #333;">-1</div>
<div class="t" style="top:160.38px;font-size:10.3px;line-height:10.3px;color:#333;left:156.50px;transform:scaleX(0.94);transform-origin:left 0;-webkit-text-stroke:0.2px #333;">206</div>
<div class="t" style="top:160.38px;font-size:10.3px;line-height:10.3px;color:#333;left:247.70px;transform:scaleX(0.94);transform-origin:left 0;-webkit-text-stroke:0.2px #333;">Order 19064</div>
<div class="t" style="top:160.38px;font-size:10.3px;line-height:10.3px;color:#333;left:338.70px;transform:scaleX(0.94);transform-origin:left 0;-webkit-text-stroke:0.2px #333;">AG 175D</div>
<div class="t" style="top:160.38px;font-size:10.3px;line-height:10.3px;color:#fff;left:447.70px;transform:scaleX(0.94);transform-origin:left 0;-webkit-text-stroke:0.2px #fff;">black</div>
<svg class="a" style="left:562.30px;top:159.60px;" width="12.0" height="10.0" viewBox="0 0 12 10"><path d="M1.5 5.2 4.5 8.2 10.5 2" fill="none" stroke="#0d6e0d" stroke-width="2.4" stroke-linecap="round" stroke-linejoin="round"/></svg>
<div class="a" style="left:0.00px;top:173.00px;width:39.50px;height:17.30px;background:#f3f3f3;"></div>
<div class="a" style="left:62.50px;top:173.00px;width:181.75px;height:17.30px;background:#cddff8;"></div>
<div class="a" style="left:43.00px;top:174.80px;width:16.50px;height:13.70px;background:#dedede;border-radius:2px;"></div>
<div class="a" style="left:22.00px;top:175.20px;width:12.50px;height:12.50px;background:#fff;border:1px solid #cfcfcf;box-sizing:border-box;border-radius:1.5px;"></div>
<div class="a" style="left:0.00px;top:189.80px;width:612.50px;height:1.00px;background:#e8e8e8;"></div>
<div class="a" style="left:426.60px;top:173.00px;width:90.90px;height:17.90px;background:#8080ff;"></div>
<div class="t" style="top:177.38px;font-size:10.3px;line-height:10.3px;color:#333;left:-382.50px;width:400px;text-align:right;transform:scaleX(0.96);transform-origin:right 0;-webkit-text-stroke:0.2px #333;">11</div>
<div class="t" style="top:177.68px;font-size:10.3px;line-height:10.3px;color:#333;left:65.50px;transform:scaleX(0.94);transform-origin:left 0;-webkit-text-stroke:0.2px #333;">-1</div>
<div class="t" style="top:177.68px;font-size:10.3px;line-height:10.3px;color:#333;left:156.50px;transform:scaleX(0.94);transform-origin:left 0;-webkit-text-stroke:0.2px #333;">207</div>
<div class="t" style="top:177.68px;font-size:10.3px;line-height:10.3px;color:#333;left:247.70px;transform:scaleX(0.94);transform-origin:left 0;-webkit-text-stroke:0.2px #333;">Order 12549</div>
<div class="t" style="top:177.68px;font-size:10.3px;line-height:10.3px;color:#333;left:338.70px;transform:scaleX(0.94);transform-origin:left 0;-webkit-text-stroke:0.2px #333;">AG 175D</div>
<div class="t" style="top:177.68px;font-size:10.3px;line-height:10.3px;color:#fff;left:447.70px;transform:scaleX(0.94);transform-origin:left 0;-webkit-text-stroke:0.2px #fff;">blue</div>
<div class="a" style="left:0.00px;top:190.30px;width:39.50px;height:17.30px;background:#f3f3f3;"></div>
<div class="a" style="left:62.50px;top:190.30px;width:181.75px;height:17.30px;background:#cddff8;"></div>
<div class="a" style="left:43.00px;top:192.10px;width:16.50px;height:13.70px;background:#dedede;border-radius:2px;"></div>
<div class="a" style="left:22.00px;top:192.50px;width:12.50px;height:12.50px;background:#fff;border:1px solid #cfcfcf;box-sizing:border-box;border-radius:1.5px;"></div>
<div class="a" style="left:0.00px;top:207.10px;width:612.50px;height:1.00px;background:#e8e8e8;"></div>
<div class="a" style="left:426.60px;top:190.30px;width:90.90px;height:17.90px;background:#000;"></div>
<div class="t" style="top:194.68px;font-size:10.3px;line-height:10.3px;color:#333;left:-382.50px;width:400px;text-align:right;transform:scaleX(0.96);transform-origin:right 0;-webkit-text-stroke:0.2px #333;">12</div>
<div class="t" style="top:194.98px;font-size:10.3px;line-height:10.3px;color:#333;left:65.50px;transform:scaleX(0.94);transform-origin:left 0;-webkit-text-stroke:0.2px #333;">-1</div>
<div class="t" style="top:194.98px;font-size:10.3px;line-height:10.3px;color:#333;left:156.50px;transform:scaleX(0.94);transform-origin:left 0;-webkit-text-stroke:0.2px #333;">208</div>
<div class="t" style="top:194.98px;font-size:10.3px;line-height:10.3px;color:#333;left:247.70px;transform:scaleX(0.94);transform-origin:left 0;-webkit-text-stroke:0.2px #333;">Order 19104</div>
<div class="t" style="top:194.98px;font-size:10.3px;line-height:10.3px;color:#333;left:338.70px;transform:scaleX(0.94);transform-origin:left 0;-webkit-text-stroke:0.2px #333;">AG 220X</div>
<div class="t" style="top:194.98px;font-size:10.3px;line-height:10.3px;color:#fff;left:447.70px;transform:scaleX(0.94);transform-origin:left 0;-webkit-text-stroke:0.2px #fff;">black</div>
<svg class="a" style="left:562.30px;top:194.20px;" width="12.0" height="10.0" viewBox="0 0 12 10"><path d="M1.5 5.2 4.5 8.2 10.5 2" fill="none" stroke="#0d6e0d" stroke-width="2.4" stroke-linecap="round" stroke-linejoin="round"/></svg>
<div class="a" style="left:0.00px;top:207.60px;width:39.50px;height:17.30px;background:#f3f3f3;"></div>
<div class="a" style="left:62.50px;top:207.60px;width:181.75px;height:17.30px;background:#cddff8;"></div>
<div class="a" style="left:43.00px;top:209.40px;width:16.50px;height:13.70px;background:#dedede;border-radius:2px;"></div>
<div class="a" style="left:22.00px;top:209.80px;width:12.50px;height:12.50px;background:#fff;border:1px solid #cfcfcf;box-sizing:border-box;border-radius:1.5px;"></div>
<div class="a" style="left:0.00px;top:224.40px;width:612.50px;height:1.00px;background:#e8e8e8;"></div>
<div class="a" style="left:426.60px;top:207.60px;width:90.90px;height:17.90px;background:#8080ff;"></div>
<div class="t" style="top:211.98px;font-size:10.3px;line-height:10.3px;color:#333;left:-382.50px;width:400px;text-align:right;transform:scaleX(0.96);transform-origin:right 0;-webkit-text-stroke:0.2px #333;">13</div>
<div class="t" style="top:212.28px;font-size:10.3px;line-height:10.3px;color:#333;left:65.50px;transform:scaleX(0.94);transform-origin:left 0;-webkit-text-stroke:0.2px #333;">-1</div>
<div class="t" style="top:212.28px;font-size:10.3px;line-height:10.3px;color:#333;left:156.50px;transform:scaleX(0.94);transform-origin:left 0;-webkit-text-stroke:0.2px #333;">209</div>
<div class="t" style="top:212.28px;font-size:10.3px;line-height:10.3px;color:#333;left:247.70px;transform:scaleX(0.94);transform-origin:left 0;-webkit-text-stroke:0.2px #333;">Order 12970</div>
<div class="t" style="top:212.28px;font-size:10.3px;line-height:10.3px;color:#333;left:338.70px;transform:scaleX(0.94);transform-origin:left 0;-webkit-text-stroke:0.2px #333;">AG 220X</div>
<div class="t" style="top:212.28px;font-size:10.3px;line-height:10.3px;color:#fff;left:447.70px;transform:scaleX(0.94);transform-origin:left 0;-webkit-text-stroke:0.2px #fff;">blue</div>
<div class="a" style="left:0.00px;top:224.90px;width:39.50px;height:17.30px;background:#f3f3f3;"></div>
<div class="a" style="left:62.50px;top:224.90px;width:181.75px;height:17.30px;background:#cddff8;"></div>
<div class="a" style="left:43.00px;top:226.70px;width:16.50px;height:13.70px;background:#dedede;border-radius:2px;"></div>
<div class="a" style="left:22.00px;top:227.10px;width:12.50px;height:12.50px;background:#fff;border:1px solid #cfcfcf;box-sizing:border-box;border-radius:1.5px;"></div>
<div class="a" style="left:0.00px;top:241.70px;width:612.50px;height:1.00px;background:#e8e8e8;"></div>
<div class="a" style="left:426.60px;top:224.90px;width:90.90px;height:17.90px;background:#000;"></div>
<div class="t" style="top:229.28px;font-size:10.3px;line-height:10.3px;color:#333;left:-382.50px;width:400px;text-align:right;transform:scaleX(0.96);transform-origin:right 0;-webkit-text-stroke:0.2px #333;">14</div>
<div class="t" style="top:229.58px;font-size:10.3px;line-height:10.3px;color:#333;left:65.50px;transform:scaleX(0.94);transform-origin:left 0;-webkit-text-stroke:0.2px #333;">-1</div>
<div class="t" style="top:229.58px;font-size:10.3px;line-height:10.3px;color:#333;left:156.50px;transform:scaleX(0.94);transform-origin:left 0;-webkit-text-stroke:0.2px #333;">210</div>
<div class="t" style="top:229.58px;font-size:10.3px;line-height:10.3px;color:#333;left:247.70px;transform:scaleX(0.94);transform-origin:left 0;-webkit-text-stroke:0.2px #333;">Order 19164</div>
<div class="t" style="top:229.58px;font-size:10.3px;line-height:10.3px;color:#333;left:338.70px;transform:scaleX(0.94);transform-origin:left 0;-webkit-text-stroke:0.2px #333;">AG 175D</div>
<div class="t" style="top:229.58px;font-size:10.3px;line-height:10.3px;color:#fff;left:447.70px;transform:scaleX(0.94);transform-origin:left 0;-webkit-text-stroke:0.2px #fff;">black</div>
<svg class="a" style="left:562.30px;top:228.80px;" width="12.0" height="10.0" viewBox="0 0 12 10"><path d="M1.5 5.2 4.5 8.2 10.5 2" fill="none" stroke="#0d6e0d" stroke-width="2.4" stroke-linecap="round" stroke-linejoin="round"/></svg>
<div class="a" style="left:0.00px;top:242.20px;width:39.50px;height:17.30px;background:#f3f3f3;"></div>
<div class="a" style="left:62.50px;top:242.20px;width:181.75px;height:17.30px;background:#cddff8;"></div>
<div class="a" style="left:43.00px;top:244.00px;width:16.50px;height:13.70px;background:#dedede;border-radius:2px;"></div>
<div class="a" style="left:22.00px;top:244.40px;width:12.50px;height:12.50px;background:#fff;border:1px solid #cfcfcf;box-sizing:border-box;border-radius:1.5px;"></div>
<div class="a" style="left:0.00px;top:259.00px;width:612.50px;height:1.00px;background:#e8e8e8;"></div>
<div class="a" style="left:426.60px;top:242.20px;width:90.90px;height:17.90px;background:#8080ff;"></div>
<div class="t" style="top:246.58px;font-size:10.3px;line-height:10.3px;color:#333;left:-382.50px;width:400px;text-align:right;transform:scaleX(0.96);transform-origin:right 0;-webkit-text-stroke:0.2px #333;">15</div>
<div class="t" style="top:246.88px;font-size:10.3px;line-height:10.3px;color:#333;left:65.50px;transform:scaleX(0.94);transform-origin:left 0;-webkit-text-stroke:0.2px #333;">-1</div>
<div class="t" style="top:246.88px;font-size:10.3px;line-height:10.3px;color:#333;left:156.50px;transform:scaleX(0.94);transform-origin:left 0;-webkit-text-stroke:0.2px #333;">211</div>
<div class="t" style="top:246.88px;font-size:10.3px;line-height:10.3px;color:#333;left:247.70px;transform:scaleX(0.94);transform-origin:left 0;-webkit-text-stroke:0.2px #333;">Order 13060</div>
<div class="t" style="top:246.88px;font-size:10.3px;line-height:10.3px;color:#333;left:338.70px;transform:scaleX(0.94);transform-origin:left 0;-webkit-text-stroke:0.2px #333;">BG 260X</div>
<div class="t" style="top:246.88px;font-size:10.3px;line-height:10.3px;color:#fff;left:447.70px;transform:scaleX(0.94);transform-origin:left 0;-webkit-text-stroke:0.2px #fff;">blue</div>
<div class="a" style="left:0.00px;top:259.50px;width:39.50px;height:17.30px;background:#f3f3f3;"></div>
<div class="a" style="left:62.50px;top:259.50px;width:181.75px;height:17.30px;background:#cddff8;"></div>
<div class="a" style="left:43.00px;top:261.30px;width:16.50px;height:13.70px;background:#dedede;border-radius:2px;"></div>
<div class="a" style="left:22.00px;top:261.70px;width:12.50px;height:12.50px;background:#fff;border:1px solid #cfcfcf;box-sizing:border-box;border-radius:1.5px;"></div>
<div class="a" style="left:0.00px;top:276.30px;width:612.50px;height:1.00px;background:#e8e8e8;"></div>
<div class="a" style="left:426.60px;top:259.50px;width:90.90px;height:17.90px;background:#000;"></div>
<div class="t" style="top:263.88px;font-size:10.3px;line-height:10.3px;color:#333;left:-382.50px;width:400px;text-align:right;transform:scaleX(0.96);transform-origin:right 0;-webkit-text-stroke:0.2px #333;">16</div>
<div class="t" style="top:264.18px;font-size:10.3px;line-height:10.3px;color:#333;left:65.50px;transform:scaleX(0.94);transform-origin:left 0;-webkit-text-stroke:0.2px #333;">-1</div>
<div class="t" style="top:264.18px;font-size:10.3px;line-height:10.3px;color:#333;left:156.50px;transform:scaleX(0.94);transform-origin:left 0;-webkit-text-stroke:0.2px #333;">212</div>
<div class="t" style="top:264.18px;font-size:10.3px;line-height:10.3px;color:#333;left:247.70px;transform:scaleX(0.94);transform-origin:left 0;-webkit-text-stroke:0.2px #333;">Order 20370</div>
<div class="t" style="top:264.18px;font-size:10.3px;line-height:10.3px;color:#333;left:338.70px;transform:scaleX(0.94);transform-origin:left 0;-webkit-text-stroke:0.2px #333;">AG 175D</div>
<div class="t" style="top:264.18px;font-size:10.3px;line-height:10.3px;color:#fff;left:447.70px;transform:scaleX(0.94);transform-origin:left 0;-webkit-text-stroke:0.2px #fff;">black</div>
<svg class="a" style="left:562.30px;top:263.40px;" width="12.0" height="10.0" viewBox="0 0 12 10"><path d="M1.5 5.2 4.5 8.2 10.5 2" fill="none" stroke="#0d6e0d" stroke-width="2.4" stroke-linecap="round" stroke-linejoin="round"/></svg>
<div class="a" style="left:0.00px;top:276.80px;width:39.50px;height:17.30px;background:#f3f3f3;"></div>
<div class="a" style="left:62.50px;top:276.80px;width:181.75px;height:17.30px;background:#cddff8;"></div>
<div class="a" style="left:43.00px;top:278.60px;width:16.50px;height:13.70px;background:#dedede;border-radius:2px;"></div>
<div class="a" style="left:22.00px;top:279.00px;width:12.50px;height:12.50px;background:#fff;border:1px solid #cfcfcf;box-sizing:border-box;border-radius:1.5px;"></div>
<div class="a" style="left:0.00px;top:293.60px;width:612.50px;height:1.00px;background:#e8e8e8;"></div>
<div class="a" style="left:426.60px;top:276.80px;width:90.90px;height:17.90px;background:#8080ff;"></div>
<div class="t" style="top:281.18px;font-size:10.3px;line-height:10.3px;color:#333;left:-382.50px;width:400px;text-align:right;transform:scaleX(0.96);transform-origin:right 0;-webkit-text-stroke:0.2px #333;">17</div>
<div class="t" style="top:281.48px;font-size:10.3px;line-height:10.3px;color:#333;left:65.50px;transform:scaleX(0.94);transform-origin:left 0;-webkit-text-stroke:0.2px #333;">-1</div>
<div class="t" style="top:281.48px;font-size:10.3px;line-height:10.3px;color:#333;left:156.50px;transform:scaleX(0.94);transform-origin:left 0;-webkit-text-stroke:0.2px #333;">213</div>
<div class="t" style="top:281.48px;font-size:10.3px;line-height:10.3px;color:#333;left:247.70px;transform:scaleX(0.94);transform-origin:left 0;-webkit-text-stroke:0.2px #333;">Order 13182</div>
<div class="t" style="top:281.48px;font-size:10.3px;line-height:10.3px;color:#333;left:338.70px;transform:scaleX(0.94);transform-origin:left 0;-webkit-text-stroke:0.2px #333;">AG 175D</div>
<div class="t" style="top:281.48px;font-size:10.3px;line-height:10.3px;color:#fff;left:447.70px;transform:scaleX(0.94);transform-origin:left 0;-webkit-text-stroke:0.2px #fff;">blue</div>
<div class="a" style="left:0.00px;top:294.10px;width:39.50px;height:17.30px;background:#f3f3f3;"></div>
<div class="a" style="left:62.50px;top:294.10px;width:181.75px;height:17.30px;background:#cddff8;"></div>
<div class="a" style="left:43.00px;top:295.90px;width:16.50px;height:13.70px;background:#dedede;border-radius:2px;"></div>
<div class="a" style="left:22.00px;top:296.30px;width:12.50px;height:12.50px;background:#fff;border:1px solid #cfcfcf;box-sizing:border-box;border-radius:1.5px;"></div>
<div class="a" style="left:0.00px;top:310.90px;width:612.50px;height:1.00px;background:#e8e8e8;"></div>
<div class="a" style="left:426.60px;top:294.10px;width:90.90px;height:17.90px;background:#000;"></div>
<div class="t" style="top:298.48px;font-size:10.3px;line-height:10.3px;color:#333;left:-382.50px;width:400px;text-align:right;transform:scaleX(0.96);transform-origin:right 0;-webkit-text-stroke:0.2px #333;">18</div>
<div class="t" style="top:298.78px;font-size:10.3px;line-height:10.3px;color:#333;left:65.50px;transform:scaleX(0.94);transform-origin:left 0;-webkit-text-stroke:0.2px #333;">-1</div>
<div class="t" style="top:298.78px;font-size:10.3px;line-height:10.3px;color:#333;left:156.50px;transform:scaleX(0.94);transform-origin:left 0;-webkit-text-stroke:0.2px #333;">214</div>
<div class="t" style="top:298.78px;font-size:10.3px;line-height:10.3px;color:#333;left:247.70px;transform:scaleX(0.94);transform-origin:left 0;-webkit-text-stroke:0.2px #333;">Order 20401</div>
<div class="t" style="top:298.78px;font-size:10.3px;line-height:10.3px;color:#333;left:338.70px;transform:scaleX(0.94);transform-origin:left 0;-webkit-text-stroke:0.2px #333;">BG 260X</div>
<div class="t" style="top:298.78px;font-size:10.3px;line-height:10.3px;color:#fff;left:447.70px;transform:scaleX(0.94);transform-origin:left 0;-webkit-text-stroke:0.2px #fff;">black</div>
<svg class="a" style="left:562.30px;top:298.00px;" width="12.0" height="10.0" viewBox="0 0 12 10"><path d="M1.5 5.2 4.5 8.2 10.5 2" fill="none" stroke="#0d6e0d" stroke-width="2.4" stroke-linecap="round" stroke-linejoin="round"/></svg>
<div class="a" style="left:0.00px;top:311.40px;width:39.50px;height:17.30px;background:#f3f3f3;"></div>
<div class="a" style="left:62.50px;top:311.40px;width:181.75px;height:17.30px;background:#cddff8;"></div>
<div class="a" style="left:43.00px;top:313.20px;width:16.50px;height:13.70px;background:#dedede;border-radius:2px;"></div>
<div class="a" style="left:22.00px;top:313.60px;width:12.50px;height:12.50px;background:#fff;border:1px solid #cfcfcf;box-sizing:border-box;border-radius:1.5px;"></div>
<div class="a" style="left:0.00px;top:328.20px;width:612.50px;height:1.00px;background:#e8e8e8;"></div>
<div class="a" style="left:426.60px;top:311.40px;width:90.90px;height:17.90px;background:#8080ff;"></div>
<div class="t" style="top:315.78px;font-size:10.3px;line-height:10.3px;color:#333;left:-382.50px;width:400px;text-align:right;transform:scaleX(0.96);transform-origin:right 0;-webkit-text-stroke:0.2px #333;">19</div>
<div class="t" style="top:316.08px;font-size:10.3px;line-height:10.3px;color:#333;left:65.50px;transform:scaleX(0.94);transform-origin:left 0;-webkit-text-stroke:0.2px #333;">-1</div>
<div class="t" style="top:316.08px;font-size:10.3px;line-height:10.3px;color:#333;left:156.50px;transform:scaleX(0.94);transform-origin:left 0;-webkit-text-stroke:0.2px #333;">215</div>
<div class="t" style="top:316.08px;font-size:10.3px;line-height:10.3px;color:#333;left:247.70px;transform:scaleX(0.94);transform-origin:left 0;-webkit-text-stroke:0.2px #333;">Order 13376</div>
<div class="t" style="top:316.08px;font-size:10.3px;line-height:10.3px;color:#333;left:338.70px;transform:scaleX(0.94);transform-origin:left 0;-webkit-text-stroke:0.2px #333;">BG 260X</div>
<div class="t" style="top:316.08px;font-size:10.3px;line-height:10.3px;color:#fff;left:447.70px;transform:scaleX(0.94);transform-origin:left 0;-webkit-text-stroke:0.2px #fff;">blue</div>
<div class="a" style="left:0.00px;top:328.70px;width:39.50px;height:17.30px;background:#f3f3f3;"></div>
<div class="a" style="left:62.50px;top:328.70px;width:181.75px;height:17.30px;background:#cddff8;"></div>
<div class="a" style="left:43.00px;top:330.50px;width:16.50px;height:13.70px;background:#dedede;border-radius:2px;"></div>
<div class="a" style="left:22.00px;top:330.90px;width:12.50px;height:12.50px;background:#fff;border:1px solid #cfcfcf;box-sizing:border-box;border-radius:1.5px;"></div>
<div class="a" style="left:0.00px;top:345.50px;width:612.50px;height:1.00px;background:#e8e8e8;"></div>
<div class="a" style="left:426.60px;top:328.70px;width:90.90px;height:17.90px;background:#8080ff;"></div>
<div class="t" style="top:333.08px;font-size:10.3px;line-height:10.3px;color:#333;left:-382.50px;width:400px;text-align:right;transform:scaleX(0.96);transform-origin:right 0;-webkit-text-stroke:0.2px #333;">20</div>
<div class="t" style="top:333.38px;font-size:10.3px;line-height:10.3px;color:#333;left:65.50px;transform:scaleX(0.94);transform-origin:left 0;-webkit-text-stroke:0.2px #333;">-1</div>
<div class="t" style="top:333.38px;font-size:10.3px;line-height:10.3px;color:#333;left:156.50px;transform:scaleX(0.94);transform-origin:left 0;-webkit-text-stroke:0.2px #333;">216</div>
<div class="t" style="top:333.38px;font-size:10.3px;line-height:10.3px;color:#333;left:247.70px;transform:scaleX(0.94);transform-origin:left 0;-webkit-text-stroke:0.2px #333;">Order 13493</div>
<div class="t" style="top:333.38px;font-size:10.3px;line-height:10.3px;color:#333;left:338.70px;transform:scaleX(0.94);transform-origin:left 0;-webkit-text-stroke:0.2px #333;">AG 175D</div>
<div class="t" style="top:333.38px;font-size:10.3px;line-height:10.3px;color:#fff;left:447.70px;transform:scaleX(0.94);transform-origin:left 0;-webkit-text-stroke:0.2px #fff;">blue</div>
<div class="a" style="left:0.00px;top:346.00px;width:39.50px;height:17.30px;background:#f3f3f3;"></div>
<div class="a" style="left:62.50px;top:346.00px;width:181.75px;height:17.30px;background:#cddff8;"></div>
<div class="a" style="left:43.00px;top:347.80px;width:16.50px;height:13.70px;background:#dedede;border-radius:2px;"></div>
<div class="a" style="left:22.00px;top:348.20px;width:12.50px;height:12.50px;background:#fff;border:1px solid #cfcfcf;box-sizing:border-box;border-radius:1.5px;"></div>
<div class="a" style="left:0.00px;top:362.80px;width:612.50px;height:1.00px;background:#e8e8e8;"></div>
<div class="a" style="left:426.60px;top:346.00px;width:90.90px;height:17.90px;background:#c8c8c8;"></div>
<div class="t" style="top:350.38px;font-size:10.3px;line-height:10.3px;color:#333;left:-382.50px;width:400px;text-align:right;transform:scaleX(0.96);transform-origin:right 0;-webkit-text-stroke:0.2px #333;">21</div>
<div class="t" style="top:350.68px;font-size:10.3px;line-height:10.3px;color:#333;left:65.50px;transform:scaleX(0.94);transform-origin:left 0;-webkit-text-stroke:0.2px #333;">-1</div>
<div class="t" style="top:350.68px;font-size:10.3px;line-height:10.3px;color:#333;left:156.50px;transform:scaleX(0.94);transform-origin:left 0;-webkit-text-stroke:0.2px #333;">217</div>
<div class="t" style="top:350.68px;font-size:10.3px;line-height:10.3px;color:#333;left:247.70px;transform:scaleX(0.94);transform-origin:left 0;-webkit-text-stroke:0.2px #333;">Order 12341</div>
<div class="t" style="top:350.68px;font-size:10.3px;line-height:10.3px;color:#333;left:338.70px;transform:scaleX(0.94);transform-origin:left 0;-webkit-text-stroke:0.2px #333;">BG 260X</div>
<div class="t" style="top:350.68px;font-size:10.3px;line-height:10.3px;color:#333;left:447.70px;transform:scaleX(0.94);transform-origin:left 0;-webkit-text-stroke:0.2px #333;">silver</div>
<svg class="a" style="left:562.30px;top:349.90px;" width="12.0" height="10.0" viewBox="0 0 12 10"><path d="M1.5 5.2 4.5 8.2 10.5 2" fill="none" stroke="#0d6e0d" stroke-width="2.4" stroke-linecap="round" stroke-linejoin="round"/></svg>
<div class="a" style="left:0.00px;top:363.30px;width:39.50px;height:17.30px;background:#f3f3f3;"></div>
<div class="a" style="left:62.50px;top:363.30px;width:181.75px;height:17.30px;background:#cddff8;"></div>
<div class="a" style="left:43.00px;top:365.10px;width:16.50px;height:13.70px;background:#dedede;border-radius:2px;"></div>
<div class="a" style="left:22.00px;top:365.50px;width:12.50px;height:12.50px;background:#fff;border:1px solid #cfcfcf;box-sizing:border-box;border-radius:1.5px;"></div>
<div class="a" style="left:0.00px;top:380.10px;width:612.50px;height:1.00px;background:#e8e8e8;"></div>
<div class="a" style="left:426.60px;top:363.30px;width:90.90px;height:17.90px;background:#c8c8c8;"></div>
<div class="t" style="top:367.68px;font-size:10.3px;line-height:10.3px;color:#333;left:-382.50px;width:400px;text-align:right;transform:scaleX(0.96);transform-origin:right 0;-webkit-text-stroke:0.2px #333;">22</div>
<div class="t" style="top:367.98px;font-size:10.3px;line-height:10.3px;color:#333;left:65.50px;transform:scaleX(0.94);transform-origin:left 0;-webkit-text-stroke:0.2px #333;">-1</div>
<div class="t" style="top:367.98px;font-size:10.3px;line-height:10.3px;color:#333;left:156.50px;transform:scaleX(0.94);transform-origin:left 0;-webkit-text-stroke:0.2px #333;">218</div>
<div class="t" style="top:367.98px;font-size:10.3px;line-height:10.3px;color:#333;left:247.70px;transform:scaleX(0.94);transform-origin:left 0;-webkit-text-stroke:0.2px #333;">Order 15966</div>
<div class="t" style="top:367.98px;font-size:10.3px;line-height:10.3px;color:#333;left:338.70px;transform:scaleX(0.94);transform-origin:left 0;-webkit-text-stroke:0.2px #333;">BG 260X</div>
<div class="t" style="top:367.98px;font-size:10.3px;line-height:10.3px;color:#333;left:447.70px;transform:scaleX(0.94);transform-origin:left 0;-webkit-text-stroke:0.2px #333;">silver</div>
<svg class="a" style="left:562.30px;top:367.20px;" width="12.0" height="10.0" viewBox="0 0 12 10"><path d="M1.5 5.2 4.5 8.2 10.5 2" fill="none" stroke="#0d6e0d" stroke-width="2.4" stroke-linecap="round" stroke-linejoin="round"/></svg>
<div class="a" style="left:0.00px;top:380.60px;width:39.50px;height:17.30px;background:#f3f3f3;"></div>
<div class="a" style="left:62.50px;top:380.60px;width:181.75px;height:17.30px;background:#cddff8;"></div>
<div class="a" style="left:43.00px;top:382.40px;width:16.50px;height:13.70px;background:#dedede;border-radius:2px;"></div>
<div class="a" style="left:22.00px;top:382.80px;width:12.50px;height:12.50px;background:#fff;border:1px solid #cfcfcf;box-sizing:border-box;border-radius:1.5px;"></div>
<div class="a" style="left:0.00px;top:397.40px;width:612.50px;height:1.00px;background:#e8e8e8;"></div>
<div class="a" style="left:426.60px;top:380.60px;width:90.90px;height:17.90px;background:#c8c8c8;"></div>
<div class="t" style="top:384.98px;font-size:10.3px;line-height:10.3px;color:#333;left:-382.50px;width:400px;text-align:right;transform:scaleX(0.96);transform-origin:right 0;-webkit-text-stroke:0.2px #333;">23</div>
<div class="t" style="top:385.28px;font-size:10.3px;line-height:10.3px;color:#333;left:65.50px;transform:scaleX(0.94);transform-origin:left 0;-webkit-text-stroke:0.2px #333;">-1</div>
<div class="t" style="top:385.28px;font-size:10.3px;line-height:10.3px;color:#333;left:156.50px;transform:scaleX(0.94);transform-origin:left 0;-webkit-text-stroke:0.2px #333;">219</div>
<div class="t" style="top:385.28px;font-size:10.3px;line-height:10.3px;color:#333;left:247.70px;transform:scaleX(0.94);transform-origin:left 0;-webkit-text-stroke:0.2px #333;">Order 16911</div>
<div class="t" style="top:385.28px;font-size:10.3px;line-height:10.3px;color:#333;left:338.70px;transform:scaleX(0.94);transform-origin:left 0;-webkit-text-stroke:0.2px #333;">AG 220X</div>
<div class="t" style="top:385.28px;font-size:10.3px;line-height:10.3px;color:#333;left:447.70px;transform:scaleX(0.94);transform-origin:left 0;-webkit-text-stroke:0.2px #333;">silver</div>
<svg class="a" style="left:562.30px;top:384.50px;" width="12.0" height="10.0" viewBox="0 0 12 10"><path d="M1.5 5.2 4.5 8.2 10.5 2" fill="none" stroke="#0d6e0d" stroke-width="2.4" stroke-linecap="round" stroke-linejoin="round"/></svg>
<div class="a" style="left:39.00px;top:0.00px;width:1.00px;height:397.90px;background:#e8e8e8;"></div>
<div class="a" style="left:62.00px;top:0.00px;width:1.00px;height:397.90px;background:#e8e8e8;"></div>
<div class="a" style="left:152.75px;top:0.00px;width:1.00px;height:397.90px;background:#e8e8e8;"></div>
<div class="a" style="left:243.75px;top:0.00px;width:1.00px;height:397.90px;background:#e8e8e8;"></div>
<div class="a" style="left:335.00px;top:0.00px;width:1.00px;height:397.90px;background:#e8e8e8;"></div>
<div class="a" style="left:426.10px;top:0.00px;width:1.00px;height:397.90px;background:#e8e8e8;"></div>
<div class="a" style="left:517.00px;top:0.00px;width:1.00px;height:397.90px;background:#e8e8e8;"></div>
<div class="a" style="left:152.75px;top:0.00px;width:1.00px;height:397.90px;background:#bfd0ea;"></div>
<div class="a" style="left:62.00px;top:0.00px;width:1.00px;height:397.90px;background:#d6d6d6;"></div>
<div class="a" style="left:243.75px;top:0.00px;width:1.00px;height:397.90px;background:#bfd0ea;"></div>
</div>
<div class="a" style="left:639.00px;top:409.50px;width:14.50px;height:394.50px;background:#f1f1f1;"></div>
<svg class="a" style="left:642.50px;top:416.00px;" width="6.5" height="3.9" viewBox="0 0 6.5 3.9"><path d="M0 3.9 3.25 0 6.5 3.9" fill="none" stroke="#222" stroke-width="1.9"/></svg>
<div class="a" style="left:640.00px;top:426.60px;width:12.00px;height:156.40px;background:#c9c9c9;"></div>
<svg class="a" style="left:642.50px;top:794.50px;" width="6.5" height="3.9" viewBox="0 0 6.5 3.9"><path d="M0 0 3.25 3.9 6.5 0" fill="none" stroke="#222" stroke-width="1.9"/></svg>
<div class="a" style="left:82.25px;top:804.00px;width:555.75px;height:15.50px;background:#f1f1f1;"></div>
<svg class="a" style="left:86.00px;top:808.00px;" width="3.9" height="6.5" viewBox="0 0 3.9 6.5"><path d="M3.9 0 0 3.25 3.9 6.5" fill="none" stroke="#222" stroke-width="1.9"/></svg>
<div class="a" style="left:97.25px;top:805.50px;width:150.75px;height:12.50px;background:#c9c9c9;"></div>
<svg class="a" style="left:628.50px;top:808.00px;" width="3.9" height="6.5" viewBox="0 0 3.9 6.5"><path d="M0 0 3.9 3.25 0 6.5" fill="none" stroke="#222" stroke-width="1.9"/></svg>
<div class="a" style="left:653.50px;top:363.00px;width:7.75px;height:461.00px;background:#e9e9e9;"></div>
<div class="a" style="left:655.00px;top:574.00px;width:5.00px;height:35.60px;background:#d4d4d4;"></div>
<div class="a" style="left:639.30px;top:355.50px;width:35.70px;height:6.70px;background:#d6d6d6;"></div>
<div class="a" style="left:661.25px;top:362.50px;width:611.25px;height:457.50px;background:#ffffff;"></div>
<div class="a" style="left:661.25px;top:819.30px;width:611.25px;height:1.40px;background:#d0d0d0;"></div>
<div class="a" style="left:661.25px;top:362.50px;width:611.25px;height:28.75px;background:#f2f2f2;"></div>
<div class="t" style="top:372.93px;font-size:11.3px;line-height:11.3px;color:#3d5d9d;left:688.75px;transform:scaleX(0.9616);transform-origin:left 0;-webkit-text-stroke:0.25px #3d5d9d;">Unsequenced</div>
<div class="a" style="left:670.50px;top:389.50px;width:102.50px;height:2.00px;background:#3a66b0;"></div>
<div class="t" style="top:372.93px;font-size:11.3px;line-height:11.3px;color:#333;left:795.00px;transform:scaleX(1.0182);transform-origin:left 0;-webkit-text-stroke:0.15px #333;">All</div>
<div class="t" style="top:372.93px;font-size:11.3px;line-height:11.3px;color:#333;left:847.00px;transform:scaleX(1.0155);transform-origin:left 0;-webkit-text-stroke:0.15px #333;">Watch lists</div>
<div class="t" style="top:399.20px;font-size:13px;line-height:13px;color:#222;left:671.25px;transform:scaleX(0.9679);transform-origin:left 0;-webkit-text-stroke:0.3px #222;">Unsequenced</div>
<div class="t" style="top:399.93px;font-size:11.3px;line-height:11.3px;color:#333;left:1094.00px;transform:scaleX(1.0120);transform-origin:left 0;-webkit-text-stroke:0.2px #333;">Actions</div>
<svg class="a" style="left:1137.50px;top:403.70px;" width="6" height="4" viewBox="0 0 6 4"><path d="M0 0H6L3.0 3.5Z" fill="#333"/></svg>
<svg class="a" style="left:1158.30px;top:400.20px;" width="10.8" height="10.8" viewBox="0 0 10.8 10.8"><path d="M9.13 4.25 L10.73 4.54 L10.73 6.26 L9.13 6.55 L8.85 7.22 L9.78 8.56 L8.56 9.78 L7.22 8.85 L6.55 9.13 L6.26 10.73 L4.54 10.73 L4.25 9.13 L3.58 8.85 L2.24 9.78 L1.02 8.56 L1.95 7.22 L1.67 6.55 L0.07 6.26 L0.07 4.54 L1.67 4.25 L1.95 3.58 L1.02 2.24 L2.24 1.02 L3.58 1.95 L4.25 1.67 L4.54 0.07 L6.26 0.07 L6.55 1.67 L7.22 1.95 L8.56 1.02 L9.78 2.24 L8.85 3.58Z" fill="#222"/><circle cx="5.4" cy="5.4" r="3.9" fill="#222"/><circle cx="5.4" cy="5.4" r="1.9" fill="#fff"/></svg>
<svg class="a" style="left:1180.40px;top:399.20px;" width="15" height="12" viewBox="0 0 15 12"><g fill="#222"><rect x="0.5" y="0" width="2" height="2"/><rect x="0.5" y="5" width="2" height="2"/><rect x="0.5" y="10" width="2" height="2"/><rect x="12.5" y="5" width="2" height="2"/></g><path d="M4.5 0.5Q7.5 0.5 7.5 3V4.5L9 6 7.5 7.5V9Q7.5 11.5 4.5 11.5" fill="none" stroke="#222" stroke-width="1.3"/></svg>
<svg class="a" style="left:1206.40px;top:400.20px;" width="10" height="10" viewBox="0 0 10 10"><path d="M0 0.5H10L6.2 5V10L3.8 8.5V5Z" fill="#222"/></svg>
<div class="a" style="left:1229.00px;top:404.40px;width:10.80px;height:1.30px;background:#555;"></div>
<div class="a" style="left:1253.50px;top:400.80px;width:9.60px;height:9.60px;border:1.3px solid #555;box-sizing:border-box;border-radius:1.2px;"></div>
<div class="a" style="left:661.25px;top:419.50px;width:611.25px;height:18.60px;background:#f3f3f3;"></div>
<div class="a" style="left:661.25px;top:419.00px;width:611.25px;height:1.00px;background:#d9d9d9;"></div>
<div class="a" style="left:661.25px;top:437.40px;width:611.25px;height:1.40px;background:#cfcfcf;"></div>
<div class="a" style="left:720.00px;top:419.50px;width:1.00px;height:18.60px;background:#d2d2d2;"></div>
<div class="a" style="left:765.00px;top:419.50px;width:1.00px;height:18.60px;background:#d2d2d2;"></div>
<div class="a" style="left:855.75px;top:419.50px;width:1.00px;height:18.60px;background:#d2d2d2;"></div>
<div class="a" style="left:947.00px;top:419.50px;width:1.00px;height:18.60px;background:#d2d2d2;"></div>
<div class="a" style="left:1038.30px;top:419.50px;width:1.00px;height:18.60px;background:#d2d2d2;"></div>
<div class="a" style="left:1128.90px;top:419.50px;width:1.00px;height:18.60px;background:#d2d2d2;"></div>
<div class="a" style="left:1219.70px;top:419.50px;width:1.00px;height:18.60px;background:#d2d2d2;"></div>
<div class="t" style="top:424.78px;font-size:10.3px;line-height:10.3px;color:#333;left:670.00px;transform:scaleX(0.96);transform-origin:left 0;-webkit-text-stroke:0.35px #333;">18891</div>
<div class="a" style="left:702.50px;top:423.00px;width:12.50px;height:12.50px;background:#fff;border:1px solid #cfcfcf;box-sizing:border-box;border-radius:1.5px;"></div>
<div class="t" style="top:424.70px;font-size:10.4px;line-height:10.4px;color:#333;left:593.00px;width:300px;text-align:center;transform:scaleX(0.9275);transform-origin:center 0;font-weight:bold;">State</div>
<div class="t" style="top:424.70px;font-size:10.4px;line-height:10.4px;color:#333;left:660.88px;width:300px;text-align:center;transform:scaleX(0.9234);transform-origin:center 0;font-weight:bold;">Order name</div>
<div class="t" style="top:424.70px;font-size:10.4px;line-height:10.4px;color:#333;left:751.88px;width:300px;text-align:center;transform:scaleX(0.9075);transform-origin:center 0;font-weight:bold;">Engine</div>
<div class="t" style="top:424.70px;font-size:10.4px;line-height:10.4px;color:#333;left:843.15px;width:300px;text-align:center;transform:scaleX(0.8889);transform-origin:center 0;font-weight:bold;">Color</div>
<div class="t" style="top:424.70px;font-size:10.4px;line-height:10.4px;color:#333;left:934.10px;width:300px;text-align:center;transform:scaleX(0.9188);transform-origin:center 0;font-weight:bold;">Phone</div>
<div class="t" style="top:424.70px;font-size:10.4px;line-height:10.4px;color:#333;left:1024.80px;width:300px;text-align:center;transform:scaleX(0.8970);transform-origin:center 0;font-weight:bold;">Doors</div>
<div class="a" style="left:1221px;top:420px;width:36.5px;height:18px;overflow:hidden">
<div class="t" style="top:4.70px;font-size:10.4px;line-height:10.4px;color:#333;left:-105.30px;width:300px;text-align:center;transform:scaleX(0.9066);transform-origin:center 0;font-weight:bold;">Weight</div>
</div>
<div class="a" style="left:661.25px;top:438.1px;width:597px;height:364.9px;overflow:hidden">
<div class="a" style="left:0.00px;top:0.00px;width:59.25px;height:17.35px;background:#f3f3f3;"></div>
<div class="a" style="left:41.25px;top:2.20px;width:12.50px;height:12.50px;background:#fff;border:1px solid #cfcfcf;box-sizing:border-box;border-radius:1.5px;"></div>
<div class="a" style="left:0.00px;top:16.85px;width:597.15px;height:1.00px;background:#e8e8e8;"></div>
<div class="a" style="left:286.25px;top:0.00px;width:91.30px;height:17.95px;background:#f88080;"></div>
<div class="t" style="top:4.48px;font-size:10.3px;line-height:10.3px;color:#333;left:-363.75px;width:400px;text-align:right;transform:scaleX(0.96);transform-origin:right 0;-webkit-text-stroke:0.2px #333;">1</div>
<div class="t" style="top:4.48px;font-size:10.3px;line-height:10.3px;color:#333;left:61.75px;transform:scaleX(0.94);transform-origin:left 0;-webkit-text-stroke:0.2px #333;">Unsele...</div>
<div class="t" style="top:4.48px;font-size:10.3px;line-height:10.3px;color:#333;left:107.45px;transform:scaleX(0.94);transform-origin:left 0;-webkit-text-stroke:0.2px #333;">Order 3117</div>
<div class="t" style="top:4.48px;font-size:10.3px;line-height:10.3px;color:#333;left:198.75px;transform:scaleX(0.94);transform-origin:left 0;-webkit-text-stroke:0.2px #333;">AG 175D</div>
<div class="t" style="top:4.48px;font-size:10.3px;line-height:10.3px;color:#333;left:289.95px;transform:scaleX(0.94);transform-origin:left 0;-webkit-text-stroke:0.2px #333;">red</div>
<svg class="a" style="left:416.75px;top:3.90px;" width="12.0" height="10.0" viewBox="0 0 12 10"><path d="M1.5 5.2 4.5 8.2 10.5 2" fill="none" stroke="#0d6e0d" stroke-width="2.4" stroke-linecap="round" stroke-linejoin="round"/></svg>
<div class="t" style="top:4.48px;font-size:10.3px;line-height:10.3px;color:#333;left:155.75px;width:400px;text-align:right;transform:scaleX(0.94);transform-origin:right 0;-webkit-text-stroke:0.2px #333;">2</div>
<div class="a" style="left:0.00px;top:17.35px;width:59.25px;height:17.35px;background:#f3f3f3;"></div>
<div class="a" style="left:41.25px;top:19.55px;width:12.50px;height:12.50px;background:#fff;border:1px solid #cfcfcf;box-sizing:border-box;border-radius:1.5px;"></div>
<div class="a" style="left:0.00px;top:34.20px;width:597.15px;height:1.00px;background:#e8e8e8;"></div>
<div class="a" style="left:286.25px;top:17.35px;width:91.30px;height:17.95px;background:#000;"></div>
<div class="t" style="top:21.83px;font-size:10.3px;line-height:10.3px;color:#333;left:-363.75px;width:400px;text-align:right;transform:scaleX(0.96);transform-origin:right 0;-webkit-text-stroke:0.2px #333;">2</div>
<div class="t" style="top:21.83px;font-size:10.3px;line-height:10.3px;color:#333;left:61.75px;transform:scaleX(0.94);transform-origin:left 0;-webkit-text-stroke:0.2px #333;">Unsele...</div>
<div class="t" style="top:21.83px;font-size:10.3px;line-height:10.3px;color:#333;left:107.45px;transform:scaleX(0.94);transform-origin:left 0;-webkit-text-stroke:0.2px #333;">Order 3118</div>
<div class="t" style="top:21.83px;font-size:10.3px;line-height:10.3px;color:#333;left:198.75px;transform:scaleX(0.94);transform-origin:left 0;-webkit-text-stroke:0.2px #333;">AG 175D</div>
<div class="t" style="top:21.83px;font-size:10.3px;line-height:10.3px;color:#fff;left:289.95px;transform:scaleX(0.94);transform-origin:left 0;-webkit-text-stroke:0.2px #fff;">black</div>
<svg class="a" style="left:416.75px;top:21.25px;" width="12.0" height="10.0" viewBox="0 0 12 10"><path d="M1.5 5.2 4.5 8.2 10.5 2" fill="none" stroke="#0d6e0d" stroke-width="2.4" stroke-linecap="round" stroke-linejoin="round"/></svg>
<div class="t" style="top:21.83px;font-size:10.3px;line-height:10.3px;color:#333;left:155.75px;width:400px;text-align:right;transform:scaleX(0.94);transform-origin:right 0;-webkit-text-stroke:0.2px #333;">3</div>
<div class="a" style="left:0.00px;top:34.70px;width:59.25px;height:17.35px;background:#f3f3f3;"></div>
<div class="a" style="left:41.25px;top:36.90px;width:12.50px;height:12.50px;background:#fff;border:1px solid #cfcfcf;box-sizing:border-box;border-radius:1.5px;"></div>
<div class="a" style="left:0.00px;top:51.55px;width:597.15px;height:1.00px;background:#e8e8e8;"></div>
<div class="a" style="left:286.25px;top:34.70px;width:91.30px;height:17.95px;background:#8080ff;"></div>
<div class="t" style="top:39.18px;font-size:10.3px;line-height:10.3px;color:#333;left:-363.75px;width:400px;text-align:right;transform:scaleX(0.96);transform-origin:right 0;-webkit-text-stroke:0.2px #333;">3</div>
<div class="t" style="top:39.18px;font-size:10.3px;line-height:10.3px;color:#333;left:61.75px;transform:scaleX(0.94);transform-origin:left 0;-webkit-text-stroke:0.2px #333;">Unsele...</div>
<div class="t" style="top:39.18px;font-size:10.3px;line-height:10.3px;color:#333;left:107.45px;transform:scaleX(0.94);transform-origin:left 0;-webkit-text-stroke:0.2px #333;">Order 3119</div>
<div class="t" style="top:39.18px;font-size:10.3px;line-height:10.3px;color:#333;left:198.75px;transform:scaleX(0.94);transform-origin:left 0;-webkit-text-stroke:0.2px #333;">BG 260X</div>
<div class="t" style="top:39.18px;font-size:10.3px;line-height:10.3px;color:#fff;left:289.95px;transform:scaleX(0.94);transform-origin:left 0;-webkit-text-stroke:0.2px #fff;">blue</div>
<svg class="a" style="left:416.75px;top:38.60px;" width="12.0" height="10.0" viewBox="0 0 12 10"><path d="M1.5 5.2 4.5 8.2 10.5 2" fill="none" stroke="#0d6e0d" stroke-width="2.4" stroke-linecap="round" stroke-linejoin="round"/></svg>
<div class="t" style="top:39.18px;font-size:10.3px;line-height:10.3px;color:#333;left:155.75px;width:400px;text-align:right;transform:scaleX(0.94);transform-origin:right 0;-webkit-text-stroke:0.2px #333;">4</div>
<div class="a" style="left:0.00px;top:52.05px;width:59.25px;height:17.35px;background:#f3f3f3;"></div>
<div class="a" style="left:41.25px;top:54.25px;width:12.50px;height:12.50px;background:#fff;border:1px solid #cfcfcf;box-sizing:border-box;border-radius:1.5px;"></div>
<div class="a" style="left:0.00px;top:68.90px;width:597.15px;height:1.00px;background:#e8e8e8;"></div>
<div class="a" style="left:286.25px;top:52.05px;width:91.30px;height:17.95px;background:#c8c8c8;"></div>
<div class="t" style="top:56.53px;font-size:10.3px;line-height:10.3px;color:#333;left:-363.75px;width:400px;text-align:right;transform:scaleX(0.96);transform-origin:right 0;-webkit-text-stroke:0.2px #333;">4</div>
<div class="t" style="top:56.53px;font-size:10.3px;line-height:10.3px;color:#333;left:61.75px;transform:scaleX(0.94);transform-origin:left 0;-webkit-text-stroke:0.2px #333;">Unsele...</div>
<div class="t" style="top:56.53px;font-size:10.3px;line-height:10.3px;color:#333;left:107.45px;transform:scaleX(0.94);transform-origin:left 0;-webkit-text-stroke:0.2px #333;">Order 3120</div>
<div class="t" style="top:56.53px;font-size:10.3px;line-height:10.3px;color:#333;left:198.75px;transform:scaleX(0.94);transform-origin:left 0;-webkit-text-stroke:0.2px #333;">AG 220X</div>
<div class="t" style="top:56.53px;font-size:10.3px;line-height:10.3px;color:#333;left:289.95px;transform:scaleX(0.94);transform-origin:left 0;-webkit-text-stroke:0.2px #333;">silver</div>
<svg class="a" style="left:416.75px;top:55.95px;" width="12.0" height="10.0" viewBox="0 0 12 10"><path d="M1.5 5.2 4.5 8.2 10.5 2" fill="none" stroke="#0d6e0d" stroke-width="2.4" stroke-linecap="round" stroke-linejoin="round"/></svg>
<div class="t" style="top:56.53px;font-size:10.3px;line-height:10.3px;color:#333;left:155.75px;width:400px;text-align:right;transform:scaleX(0.94);transform-origin:right 0;-webkit-text-stroke:0.2px #333;">4</div>
<div class="a" style="left:0.00px;top:69.40px;width:59.25px;height:17.35px;background:#f3f3f3;"></div>
<div class="a" style="left:41.25px;top:71.60px;width:12.50px;height:12.50px;background:#fff;border:1px solid #cfcfcf;box-sizing:border-box;border-radius:1.5px;"></div>
<div class="a" style="left:0.00px;top:86.25px;width:597.15px;height:1.00px;background:#e8e8e8;"></div>
<div class="a" style="left:286.25px;top:69.40px;width:91.30px;height:17.95px;background:#000;"></div>
<div class="t" style="top:73.88px;font-size:10.3px;line-height:10.3px;color:#333;left:-363.75px;width:400px;text-align:right;transform:scaleX(0.96);transform-origin:right 0;-webkit-text-stroke:0.2px #333;">5</div>
<div class="t" style="top:73.88px;font-size:10.3px;line-height:10.3px;color:#333;left:61.75px;transform:scaleX(0.94);transform-origin:left 0;-webkit-text-stroke:0.2px #333;">Unsele...</div>
<div class="t" style="top:73.88px;font-size:10.3px;line-height:10.3px;color:#333;left:107.45px;transform:scaleX(0.94);transform-origin:left 0;-webkit-text-stroke:0.2px #333;">Order 3121</div>
<div class="t" style="top:73.88px;font-size:10.3px;line-height:10.3px;color:#333;left:198.75px;transform:scaleX(0.94);transform-origin:left 0;-webkit-text-stroke:0.2px #333;">BG 260X</div>
<div class="t" style="top:73.88px;font-size:10.3px;line-height:10.3px;color:#fff;left:289.95px;transform:scaleX(0.94);transform-origin:left 0;-webkit-text-stroke:0.2px #fff;">black</div>
<svg class="a" style="left:416.75px;top:73.30px;" width="12.0" height="10.0" viewBox="0 0 12 10"><path d="M1.5 5.2 4.5 8.2 10.5 2" fill="none" stroke="#0d6e0d" stroke-width="2.4" stroke-linecap="round" stroke-linejoin="round"/></svg>
<div class="t" style="top:73.88px;font-size:10.3px;line-height:10.3px;color:#333;left:155.75px;width:400px;text-align:right;transform:scaleX(0.94);transform-origin:right 0;-webkit-text-stroke:0.2px #333;">2</div>
<div class="a" style="left:0.00px;top:86.75px;width:59.25px;height:17.35px;background:#f3f3f3;"></div>
<div class="a" style="left:41.25px;top:88.95px;width:12.50px;height:12.50px;background:#fff;border:1px solid #cfcfcf;box-sizing:border-box;border-radius:1.5px;"></div>
<div class="a" style="left:0.00px;top:103.60px;width:597.15px;height:1.00px;background:#e8e8e8;"></div>
<div class="a" style="left:286.25px;top:86.75px;width:91.30px;height:17.95px;background:#8080ff;"></div>
<div class="t" style="top:91.23px;font-size:10.3px;line-height:10.3px;color:#333;left:-363.75px;width:400px;text-align:right;transform:scaleX(0.96);transform-origin:right 0;-webkit-text-stroke:0.2px #333;">6</div>
<div class="t" style="top:91.23px;font-size:10.3px;line-height:10.3px;color:#333;left:61.75px;transform:scaleX(0.94);transform-origin:left 0;-webkit-text-stroke:0.2px #333;">Unsele...</div>
<div class="t" style="top:91.23px;font-size:10.3px;line-height:10.3px;color:#333;left:107.45px;transform:scaleX(0.94);transform-origin:left 0;-webkit-text-stroke:0.2px #333;">Order 3122</div>
<div class="t" style="top:91.23px;font-size:10.3px;line-height:10.3px;color:#333;left:198.75px;transform:scaleX(0.94);transform-origin:left 0;-webkit-text-stroke:0.2px #333;">BG 260X</div>
<div class="t" style="top:91.23px;font-size:10.3px;line-height:10.3px;color:#fff;left:289.95px;transform:scaleX(0.94);transform-origin:left 0;-webkit-text-stroke:0.2px #fff;">blue</div>
<div class="t" style="top:91.23px;font-size:10.3px;line-height:10.3px;color:#333;left:155.75px;width:400px;text-align:right;transform:scaleX(0.94);transform-origin:right 0;-webkit-text-stroke:0.2px #333;">4</div>
<div class="a" style="left:0.00px;top:104.10px;width:59.25px;height:17.35px;background:#f3f3f3;"></div>
<div class="a" style="left:41.25px;top:106.30px;width:12.50px;height:12.50px;background:#fff;border:1px solid #cfcfcf;box-sizing:border-box;border-radius:1.5px;"></div>
<div class="a" style="left:0.00px;top:120.95px;width:597.15px;height:1.00px;background:#e8e8e8;"></div>
<div class="a" style="left:286.25px;top:104.10px;width:91.30px;height:17.95px;background:#8080ff;"></div>
<div class="t" style="top:108.58px;font-size:10.3px;line-height:10.3px;color:#333;left:-363.75px;width:400px;text-align:right;transform:scaleX(0.96);transform-origin:right 0;-webkit-text-stroke:0.2px #333;">7</div>
<div class="t" style="top:108.58px;font-size:10.3px;line-height:10.3px;color:#333;left:61.75px;transform:scaleX(0.94);transform-origin:left 0;-webkit-text-stroke:0.2px #333;">Unsele...</div>
<div class="t" style="top:108.58px;font-size:10.3px;line-height:10.3px;color:#333;left:107.45px;transform:scaleX(0.94);transform-origin:left 0;-webkit-text-stroke:0.2px #333;">Order 3123</div>
<div class="t" style="top:108.58px;font-size:10.3px;line-height:10.3px;color:#333;left:198.75px;transform:scaleX(0.94);transform-origin:left 0;-webkit-text-stroke:0.2px #333;">BG 260X</div>
<div class="t" style="top:108.58px;font-size:10.3px;line-height:10.3px;color:#fff;left:289.95px;transform:scaleX(0.94);transform-origin:left 0;-webkit-text-stroke:0.2px #fff;">blue</div>
<svg class="a" style="left:416.75px;top:108.00px;" width="12.0" height="10.0" viewBox="0 0 12 10"><path d="M1.5 5.2 4.5 8.2 10.5 2" fill="none" stroke="#0d6e0d" stroke-width="2.4" stroke-linecap="round" stroke-linejoin="round"/></svg>
<div class="t" style="top:108.58px;font-size:10.3px;line-height:10.3px;color:#333;left:155.75px;width:400px;text-align:right;transform:scaleX(0.94);transform-origin:right 0;-webkit-text-stroke:0.2px #333;">4</div>
<div class="a" style="left:0.00px;top:121.45px;width:59.25px;height:17.35px;background:#f3f3f3;"></div>
<div class="a" style="left:41.25px;top:123.65px;width:12.50px;height:12.50px;background:#fff;border:1px solid #cfcfcf;box-sizing:border-box;border-radius:1.5px;"></div>
<div class="a" style="left:0.00px;top:138.30px;width:597.15px;height:1.00px;background:#e8e8e8;"></div>
<div class="a" style="left:286.25px;top:121.45px;width:91.30px;height:17.95px;background:#c8c8c8;"></div>
<div class="t" style="top:125.93px;font-size:10.3px;line-height:10.3px;color:#333;left:-363.75px;width:400px;text-align:right;transform:scaleX(0.96);transform-origin:right 0;-webkit-text-stroke:0.2px #333;">8</div>
<div class="t" style="top:125.93px;font-size:10.3px;line-height:10.3px;color:#333;left:61.75px;transform:scaleX(0.94);transform-origin:left 0;-webkit-text-stroke:0.2px #333;">Unsele...</div>
<div class="t" style="top:125.93px;font-size:10.3px;line-height:10.3px;color:#333;left:107.45px;transform:scaleX(0.94);transform-origin:left 0;-webkit-text-stroke:0.2px #333;">Order 3124</div>
<div class="t" style="top:125.93px;font-size:10.3px;line-height:10.3px;color:#333;left:198.75px;transform:scaleX(0.94);transform-origin:left 0;-webkit-text-stroke:0.2px #333;">AG 220X</div>
<div class="t" style="top:125.93px;font-size:10.3px;line-height:10.3px;color:#333;left:289.95px;transform:scaleX(0.94);transform-origin:left 0;-webkit-text-stroke:0.2px #333;">silver</div>
<div class="t" style="top:125.93px;font-size:10.3px;line-height:10.3px;color:#333;left:155.75px;width:400px;text-align:right;transform:scaleX(0.94);transform-origin:right 0;-webkit-text-stroke:0.2px #333;">4</div>
<div class="a" style="left:0.00px;top:138.80px;width:59.25px;height:17.35px;background:#f3f3f3;"></div>
<div class="a" style="left:41.25px;top:141.00px;width:12.50px;height:12.50px;background:#fff;border:1px solid #cfcfcf;box-sizing:border-box;border-radius:1.5px;"></div>
<div class="a" style="left:0.00px;top:155.65px;width:597.15px;height:1.00px;background:#e8e8e8;"></div>
<div class="a" style="left:286.25px;top:138.80px;width:91.30px;height:17.95px;background:#8080ff;"></div>
<div class="t" style="top:143.28px;font-size:10.3px;line-height:10.3px;color:#333;left:-363.75px;width:400px;text-align:right;transform:scaleX(0.96);transform-origin:right 0;-webkit-text-stroke:0.2px #333;">9</div>
<div class="t" style="top:143.28px;font-size:10.3px;line-height:10.3px;color:#333;left:61.75px;transform:scaleX(0.94);transform-origin:left 0;-webkit-text-stroke:0.2px #333;">Unsele...</div>
<div class="t" style="top:143.28px;font-size:10.3px;line-height:10.3px;color:#333;left:107.45px;transform:scaleX(0.94);transform-origin:left 0;-webkit-text-stroke:0.2px #333;">Order 3125</div>
<div class="t" style="top:143.28px;font-size:10.3px;line-height:10.3px;color:#333;left:198.75px;transform:scaleX(0.94);transform-origin:left 0;-webkit-text-stroke:0.2px #333;">AG 220X</div>
<div class="t" style="top:143.28px;font-size:10.3px;line-height:10.3px;color:#fff;left:289.95px;transform:scaleX(0.94);transform-origin:left 0;-webkit-text-stroke:0.2px #fff;">blue</div>
<div class="t" style="top:143.28px;font-size:10.3px;line-height:10.3px;color:#333;left:155.75px;width:400px;text-align:right;transform:scaleX(0.94);transform-origin:right 0;-webkit-text-stroke:0.2px #333;">3</div>
<div class="a" style="left:0.00px;top:156.15px;width:59.25px;height:17.35px;background:#f3f3f3;"></div>
<div class="a" style="left:41.25px;top:158.35px;width:12.50px;height:12.50px;background:#fff;border:1px solid #cfcfcf;box-sizing:border-box;border-radius:1.5px;"></div>
<div class="a" style="left:0.00px;top:173.00px;width:597.15px;height:1.00px;background:#e8e8e8;"></div>
<div class="a" style="left:286.25px;top:156.15px;width:91.30px;height:17.95px;background:#8080ff;"></div>
<div class="t" style="top:160.63px;font-size:10.3px;line-height:10.3px;color:#333;left:-363.75px;width:400px;text-align:right;transform:scaleX(0.96);transform-origin:right 0;-webkit-text-stroke:0.2px #333;">10</div>
<div class="t" style="top:160.63px;font-size:10.3px;line-height:10.3px;color:#333;left:61.75px;transform:scaleX(0.94);transform-origin:left 0;-webkit-text-stroke:0.2px #333;">Unsele...</div>
<div class="t" style="top:160.63px;font-size:10.3px;line-height:10.3px;color:#333;left:107.45px;transform:scaleX(0.94);transform-origin:left 0;-webkit-text-stroke:0.2px #333;">Order 3126</div>
<div class="t" style="top:160.63px;font-size:10.3px;line-height:10.3px;color:#333;left:198.75px;transform:scaleX(0.94);transform-origin:left 0;-webkit-text-stroke:0.2px #333;">AG 220X</div>
<div class="t" style="top:160.63px;font-size:10.3px;line-height:10.3px;color:#fff;left:289.95px;transform:scaleX(0.94);transform-origin:left 0;-webkit-text-stroke:0.2px #fff;">blue</div>
<div class="t" style="top:160.63px;font-size:10.3px;line-height:10.3px;color:#333;left:155.75px;width:400px;text-align:right;transform:scaleX(0.94);transform-origin:right 0;-webkit-text-stroke:0.2px #333;">4</div>
<div class="a" style="left:0.00px;top:173.50px;width:59.25px;height:17.35px;background:#f3f3f3;"></div>
<div class="a" style="left:41.25px;top:175.70px;width:12.50px;height:12.50px;background:#fff;border:1px solid #cfcfcf;box-sizing:border-box;border-radius:1.5px;"></div>
<div class="a" style="left:0.00px;top:190.35px;width:597.15px;height:1.00px;background:#e8e8e8;"></div>
<div class="a" style="left:286.25px;top:173.50px;width:91.30px;height:17.95px;background:#8080ff;"></div>
<div class="t" style="top:177.98px;font-size:10.3px;line-height:10.3px;color:#333;left:-363.75px;width:400px;text-align:right;transform:scaleX(0.96);transform-origin:right 0;-webkit-text-stroke:0.2px #333;">11</div>
<div class="t" style="top:177.98px;font-size:10.3px;line-height:10.3px;color:#333;left:61.75px;transform:scaleX(0.94);transform-origin:left 0;-webkit-text-stroke:0.2px #333;">Unsele...</div>
<div class="t" style="top:177.98px;font-size:10.3px;line-height:10.3px;color:#333;left:107.45px;transform:scaleX(0.94);transform-origin:left 0;-webkit-text-stroke:0.2px #333;">Order 3127</div>
<div class="t" style="top:177.98px;font-size:10.3px;line-height:10.3px;color:#333;left:198.75px;transform:scaleX(0.94);transform-origin:left 0;-webkit-text-stroke:0.2px #333;">BG 260X</div>
<div class="t" style="top:177.98px;font-size:10.3px;line-height:10.3px;color:#fff;left:289.95px;transform:scaleX(0.94);transform-origin:left 0;-webkit-text-stroke:0.2px #fff;">blue</div>
<div class="t" style="top:177.98px;font-size:10.3px;line-height:10.3px;color:#333;left:155.75px;width:400px;text-align:right;transform:scaleX(0.94);transform-origin:right 0;-webkit-text-stroke:0.2px #333;">3</div>
<div class="a" style="left:0.00px;top:190.85px;width:59.25px;height:17.35px;background:#f3f3f3;"></div>
<div class="a" style="left:41.25px;top:193.05px;width:12.50px;height:12.50px;background:#fff;border:1px solid #cfcfcf;box-sizing:border-box;border-radius:1.5px;"></div>
<div class="a" style="left:0.00px;top:207.70px;width:597.15px;height:1.00px;background:#e8e8e8;"></div>
<div class="a" style="left:286.25px;top:190.85px;width:91.30px;height:17.95px;background:#000;"></div>
<div class="t" style="top:195.33px;font-size:10.3px;line-height:10.3px;color:#333;left:-363.75px;width:400px;text-align:right;transform:scaleX(0.96);transform-origin:right 0;-webkit-text-stroke:0.2px #333;">12</div>
<div class="t" style="top:195.33px;font-size:10.3px;line-height:10.3px;color:#333;left:61.75px;transform:scaleX(0.94);transform-origin:left 0;-webkit-text-stroke:0.2px #333;">Unsele...</div>
<div class="t" style="top:195.33px;font-size:10.3px;line-height:10.3px;color:#333;left:107.45px;transform:scaleX(0.94);transform-origin:left 0;-webkit-text-stroke:0.2px #333;">Order 3128</div>
<div class="t" style="top:195.33px;font-size:10.3px;line-height:10.3px;color:#333;left:198.75px;transform:scaleX(0.94);transform-origin:left 0;-webkit-text-stroke:0.2px #333;">AG 220X</div>
<div class="t" style="top:195.33px;font-size:10.3px;line-height:10.3px;color:#fff;left:289.95px;transform:scaleX(0.94);transform-origin:left 0;-webkit-text-stroke:0.2px #fff;">black</div>
<svg class="a" style="left:416.75px;top:194.75px;" width="12.0" height="10.0" viewBox="0 0 12 10"><path d="M1.5 5.2 4.5 8.2 10.5 2" fill="none" stroke="#0d6e0d" stroke-width="2.4" stroke-linecap="round" stroke-linejoin="round"/></svg>
<div class="t" style="top:195.33px;font-size:10.3px;line-height:10.3px;color:#333;left:155.75px;width:400px;text-align:right;transform:scaleX(0.94);transform-origin:right 0;-webkit-text-stroke:0.2px #333;">4</div>
<div class="a" style="left:0.00px;top:208.20px;width:59.25px;height:17.35px;background:#f3f3f3;"></div>
<div class="a" style="left:41.25px;top:210.40px;width:12.50px;height:12.50px;background:#fff;border:1px solid #cfcfcf;box-sizing:border-box;border-radius:1.5px;"></div>
<div class="a" style="left:0.00px;top:225.05px;width:597.15px;height:1.00px;background:#e8e8e8;"></div>
<div class="a" style="left:286.25px;top:208.20px;width:91.30px;height:17.95px;background:#c8c8c8;"></div>
<div class="t" style="top:212.68px;font-size:10.3px;line-height:10.3px;color:#333;left:-363.75px;width:400px;text-align:right;transform:scaleX(0.96);transform-origin:right 0;-webkit-text-stroke:0.2px #333;">13</div>
<div class="t" style="top:212.68px;font-size:10.3px;line-height:10.3px;color:#333;left:61.75px;transform:scaleX(0.94);transform-origin:left 0;-webkit-text-stroke:0.2px #333;">Unsele...</div>
<div class="t" style="top:212.68px;font-size:10.3px;line-height:10.3px;color:#333;left:107.45px;transform:scaleX(0.94);transform-origin:left 0;-webkit-text-stroke:0.2px #333;">Order 3129</div>
<div class="t" style="top:212.68px;font-size:10.3px;line-height:10.3px;color:#333;left:198.75px;transform:scaleX(0.94);transform-origin:left 0;-webkit-text-stroke:0.2px #333;">AG 175D</div>
<div class="t" style="top:212.68px;font-size:10.3px;line-height:10.3px;color:#333;left:289.95px;transform:scaleX(0.94);transform-origin:left 0;-webkit-text-stroke:0.2px #333;">silver</div>
<svg class="a" style="left:416.75px;top:212.10px;" width="12.0" height="10.0" viewBox="0 0 12 10"><path d="M1.5 5.2 4.5 8.2 10.5 2" fill="none" stroke="#0d6e0d" stroke-width="2.4" stroke-linecap="round" stroke-linejoin="round"/></svg>
<div class="t" style="top:212.68px;font-size:10.3px;line-height:10.3px;color:#333;left:155.75px;width:400px;text-align:right;transform:scaleX(0.94);transform-origin:right 0;-webkit-text-stroke:0.2px #333;">4</div>
<div class="a" style="left:0.00px;top:225.55px;width:59.25px;height:17.35px;background:#f3f3f3;"></div>
<div class="a" style="left:41.25px;top:227.75px;width:12.50px;height:12.50px;background:#fff;border:1px solid #cfcfcf;box-sizing:border-box;border-radius:1.5px;"></div>
<div class="a" style="left:0.00px;top:242.40px;width:597.15px;height:1.00px;background:#e8e8e8;"></div>
<div class="a" style="left:286.25px;top:225.55px;width:91.30px;height:17.95px;background:#f88080;"></div>
<div class="t" style="top:230.03px;font-size:10.3px;line-height:10.3px;color:#333;left:-363.75px;width:400px;text-align:right;transform:scaleX(0.96);transform-origin:right 0;-webkit-text-stroke:0.2px #333;">14</div>
<div class="t" style="top:230.03px;font-size:10.3px;line-height:10.3px;color:#333;left:61.75px;transform:scaleX(0.94);transform-origin:left 0;-webkit-text-stroke:0.2px #333;">Unsele...</div>
<div class="t" style="top:230.03px;font-size:10.3px;line-height:10.3px;color:#333;left:107.45px;transform:scaleX(0.94);transform-origin:left 0;-webkit-text-stroke:0.2px #333;">Order 3130</div>
<div class="t" style="top:230.03px;font-size:10.3px;line-height:10.3px;color:#333;left:198.75px;transform:scaleX(0.94);transform-origin:left 0;-webkit-text-stroke:0.2px #333;">AG 220X</div>
<div class="t" style="top:230.03px;font-size:10.3px;line-height:10.3px;color:#333;left:289.95px;transform:scaleX(0.94);transform-origin:left 0;-webkit-text-stroke:0.2px #333;">red</div>
<svg class="a" style="left:416.75px;top:229.45px;" width="12.0" height="10.0" viewBox="0 0 12 10"><path d="M1.5 5.2 4.5 8.2 10.5 2" fill="none" stroke="#0d6e0d" stroke-width="2.4" stroke-linecap="round" stroke-linejoin="round"/></svg>
<div class="t" style="top:230.03px;font-size:10.3px;line-height:10.3px;color:#333;left:155.75px;width:400px;text-align:right;transform:scaleX(0.94);transform-origin:right 0;-webkit-text-stroke:0.2px #333;">2</div>
<div class="a" style="left:0.00px;top:242.90px;width:59.25px;height:17.35px;background:#f3f3f3;"></div>
<div class="a" style="left:41.25px;top:245.10px;width:12.50px;height:12.50px;background:#fff;border:1px solid #cfcfcf;box-sizing:border-box;border-radius:1.5px;"></div>
<div class="a" style="left:0.00px;top:259.75px;width:597.15px;height:1.00px;background:#e8e8e8;"></div>
<div class="a" style="left:286.25px;top:242.90px;width:91.30px;height:17.95px;background:#c8c8c8;"></div>
<div class="t" style="top:247.38px;font-size:10.3px;line-height:10.3px;color:#333;left:-363.75px;width:400px;text-align:right;transform:scaleX(0.96);transform-origin:right 0;-webkit-text-stroke:0.2px #333;">15</div>
<div class="t" style="top:247.38px;font-size:10.3px;line-height:10.3px;color:#333;left:61.75px;transform:scaleX(0.94);transform-origin:left 0;-webkit-text-stroke:0.2px #333;">Unsele...</div>
<div class="t" style="top:247.38px;font-size:10.3px;line-height:10.3px;color:#333;left:107.45px;transform:scaleX(0.94);transform-origin:left 0;-webkit-text-stroke:0.2px #333;">Order 3131</div>
<div class="t" style="top:247.38px;font-size:10.3px;line-height:10.3px;color:#333;left:198.75px;transform:scaleX(0.94);transform-origin:left 0;-webkit-text-stroke:0.2px #333;">BG 260X</div>
<div class="t" style="top:247.38px;font-size:10.3px;line-height:10.3px;color:#333;left:289.95px;transform:scaleX(0.94);transform-origin:left 0;-webkit-text-stroke:0.2px #333;">silver</div>
<svg class="a" style="left:416.75px;top:246.80px;" width="12.0" height="10.0" viewBox="0 0 12 10"><path d="M1.5 5.2 4.5 8.2 10.5 2" fill="none" stroke="#0d6e0d" stroke-width="2.4" stroke-linecap="round" stroke-linejoin="round"/></svg>
<div class="t" style="top:247.38px;font-size:10.3px;line-height:10.3px;color:#333;left:155.75px;width:400px;text-align:right;transform:scaleX(0.94);transform-origin:right 0;-webkit-text-stroke:0.2px #333;">2</div>
<div class="a" style="left:0.00px;top:260.25px;width:59.25px;height:17.35px;background:#f3f3f3;"></div>
<div class="a" style="left:41.25px;top:262.45px;width:12.50px;height:12.50px;background:#fff;border:1px solid #cfcfcf;box-sizing:border-box;border-radius:1.5px;"></div>
<div class="a" style="left:0.00px;top:277.10px;width:597.15px;height:1.00px;background:#e8e8e8;"></div>
<div class="a" style="left:286.25px;top:260.25px;width:91.30px;height:17.95px;background:#8080ff;"></div>
<div class="t" style="top:264.73px;font-size:10.3px;line-height:10.3px;color:#333;left:-363.75px;width:400px;text-align:right;transform:scaleX(0.96);transform-origin:right 0;-webkit-text-stroke:0.2px #333;">16</div>
<div class="t" style="top:264.73px;font-size:10.3px;line-height:10.3px;color:#333;left:61.75px;transform:scaleX(0.94);transform-origin:left 0;-webkit-text-stroke:0.2px #333;">Unsele...</div>
<div class="t" style="top:264.73px;font-size:10.3px;line-height:10.3px;color:#333;left:107.45px;transform:scaleX(0.94);transform-origin:left 0;-webkit-text-stroke:0.2px #333;">Order 3132</div>
<div class="t" style="top:264.73px;font-size:10.3px;line-height:10.3px;color:#333;left:198.75px;transform:scaleX(0.94);transform-origin:left 0;-webkit-text-stroke:0.2px #333;">AG 220X</div>
<div class="t" style="top:264.73px;font-size:10.3px;line-height:10.3px;color:#fff;left:289.95px;transform:scaleX(0.94);transform-origin:left 0;-webkit-text-stroke:0.2px #fff;">blue</div>
<div class="t" style="top:264.73px;font-size:10.3px;line-height:10.3px;color:#333;left:155.75px;width:400px;text-align:right;transform:scaleX(0.94);transform-origin:right 0;-webkit-text-stroke:0.2px #333;">4</div>
<div class="a" style="left:0.00px;top:277.60px;width:59.25px;height:17.35px;background:#f3f3f3;"></div>
<div class="a" style="left:41.25px;top:279.80px;width:12.50px;height:12.50px;background:#fff;border:1px solid #cfcfcf;box-sizing:border-box;border-radius:1.5px;"></div>
<div class="a" style="left:0.00px;top:294.45px;width:597.15px;height:1.00px;background:#e8e8e8;"></div>
<div class="a" style="left:286.25px;top:277.60px;width:91.30px;height:17.95px;background:#f88080;"></div>
<div class="t" style="top:282.08px;font-size:10.3px;line-height:10.3px;color:#333;left:-363.75px;width:400px;text-align:right;transform:scaleX(0.96);transform-origin:right 0;-webkit-text-stroke:0.2px #333;">17</div>
<div class="t" style="top:282.08px;font-size:10.3px;line-height:10.3px;color:#333;left:61.75px;transform:scaleX(0.94);transform-origin:left 0;-webkit-text-stroke:0.2px #333;">Unsele...</div>
<div class="t" style="top:282.08px;font-size:10.3px;line-height:10.3px;color:#333;left:107.45px;transform:scaleX(0.94);transform-origin:left 0;-webkit-text-stroke:0.2px #333;">Order 3133</div>
<div class="t" style="top:282.08px;font-size:10.3px;line-height:10.3px;color:#333;left:198.75px;transform:scaleX(0.94);transform-origin:left 0;-webkit-text-stroke:0.2px #333;">BG 260X</div>
<div class="t" style="top:282.08px;font-size:10.3px;line-height:10.3px;color:#333;left:289.95px;transform:scaleX(0.94);transform-origin:left 0;-webkit-text-stroke:0.2px #333;">red</div>
<div class="t" style="top:282.08px;font-size:10.3px;line-height:10.3px;color:#333;left:155.75px;width:400px;text-align:right;transform:scaleX(0.94);transform-origin:right 0;-webkit-text-stroke:0.2px #333;">4</div>
<div class="a" style="left:0.00px;top:294.95px;width:59.25px;height:17.35px;background:#f3f3f3;"></div>
<div class="a" style="left:41.25px;top:297.15px;width:12.50px;height:12.50px;background:#fff;border:1px solid #cfcfcf;box-sizing:border-box;border-radius:1.5px;"></div>
<div class="a" style="left:0.00px;top:311.80px;width:597.15px;height:1.00px;background:#e8e8e8;"></div>
<div class="a" style="left:286.25px;top:294.95px;width:91.30px;height:17.95px;background:#c8c8c8;"></div>
<div class="t" style="top:299.43px;font-size:10.3px;line-height:10.3px;color:#333;left:-363.75px;width:400px;text-align:right;transform:scaleX(0.96);transform-origin:right 0;-webkit-text-stroke:0.2px #333;">18</div>
<div class="t" style="top:299.43px;font-size:10.3px;line-height:10.3px;color:#333;left:61.75px;transform:scaleX(0.94);transform-origin:left 0;-webkit-text-stroke:0.2px #333;">Unsele...</div>
<div class="t" style="top:299.43px;font-size:10.3px;line-height:10.3px;color:#333;left:107.45px;transform:scaleX(0.94);transform-origin:left 0;-webkit-text-stroke:0.2px #333;">Order 3134</div>
<div class="t" style="top:299.43px;font-size:10.3px;line-height:10.3px;color:#333;left:198.75px;transform:scaleX(0.94);transform-origin:left 0;-webkit-text-stroke:0.2px #333;">BG 260X</div>
<div class="t" style="top:299.43px;font-size:10.3px;line-height:10.3px;color:#333;left:289.95px;transform:scaleX(0.94);transform-origin:left 0;-webkit-text-stroke:0.2px #333;">silver</div>
<svg class="a" style="left:416.75px;top:298.85px;" width="12.0" height="10.0" viewBox="0 0 12 10"><path d="M1.5 5.2 4.5 8.2 10.5 2" fill="none" stroke="#0d6e0d" stroke-width="2.4" stroke-linecap="round" stroke-linejoin="round"/></svg>
<div class="t" style="top:299.43px;font-size:10.3px;line-height:10.3px;color:#333;left:155.75px;width:400px;text-align:right;transform:scaleX(0.94);transform-origin:right 0;-webkit-text-stroke:0.2px #333;">4</div>
<div class="a" style="left:0.00px;top:312.30px;width:59.25px;height:17.35px;background:#f3f3f3;"></div>
<div class="a" style="left:41.25px;top:314.50px;width:12.50px;height:12.50px;background:#fff;border:1px solid #cfcfcf;box-sizing:border-box;border-radius:1.5px;"></div>
<div class="a" style="left:0.00px;top:329.15px;width:597.15px;height:1.00px;background:#e8e8e8;"></div>
<div class="a" style="left:286.25px;top:312.30px;width:91.30px;height:17.95px;background:#8080ff;"></div>
<div class="t" style="top:316.78px;font-size:10.3px;line-height:10.3px;color:#333;left:-363.75px;width:400px;text-align:right;transform:scaleX(0.96);transform-origin:right 0;-webkit-text-stroke:0.2px #333;">19</div>
<div class="t" style="top:316.78px;font-size:10.3px;line-height:10.3px;color:#333;left:61.75px;transform:scaleX(0.94);transform-origin:left 0;-webkit-text-stroke:0.2px #333;">Unsele...</div>
<div class="t" style="top:316.78px;font-size:10.3px;line-height:10.3px;color:#333;left:107.45px;transform:scaleX(0.94);transform-origin:left 0;-webkit-text-stroke:0.2px #333;">Order 3135</div>
<div class="t" style="top:316.78px;font-size:10.3px;line-height:10.3px;color:#333;left:198.75px;transform:scaleX(0.94);transform-origin:left 0;-webkit-text-stroke:0.2px #333;">AG 220X</div>
<div class="t" style="top:316.78px;font-size:10.3px;line-height:10.3px;color:#fff;left:289.95px;transform:scaleX(0.94);transform-origin:left 0;-webkit-text-stroke:0.2px #fff;">blue</div>
<svg class="a" style="left:416.75px;top:316.20px;" width="12.0" height="10.0" viewBox="0 0 12 10"><path d="M1.5 5.2 4.5 8.2 10.5 2" fill="none" stroke="#0d6e0d" stroke-width="2.4" stroke-linecap="round" stroke-linejoin="round"/></svg>
<div class="t" style="top:316.78px;font-size:10.3px;line-height:10.3px;color:#333;left:155.75px;width:400px;text-align:right;transform:scaleX(0.94);transform-origin:right 0;-webkit-text-stroke:0.2px #333;">2</div>
<div class="a" style="left:0.00px;top:329.65px;width:59.25px;height:17.35px;background:#f3f3f3;"></div>
<div class="a" style="left:41.25px;top:331.85px;width:12.50px;height:12.50px;background:#fff;border:1px solid #cfcfcf;box-sizing:border-box;border-radius:1.5px;"></div>
<div class="a" style="left:0.00px;top:346.50px;width:597.15px;height:1.00px;background:#e8e8e8;"></div>
<div class="a" style="left:286.25px;top:329.65px;width:91.30px;height:17.95px;background:#f88080;"></div>
<div class="t" style="top:334.13px;font-size:10.3px;line-height:10.3px;color:#333;left:-363.75px;width:400px;text-align:right;transform:scaleX(0.96);transform-origin:right 0;-webkit-text-stroke:0.2px #333;">20</div>
<div class="t" style="top:334.13px;font-size:10.3px;line-height:10.3px;color:#333;left:61.75px;transform:scaleX(0.94);transform-origin:left 0;-webkit-text-stroke:0.2px #333;">Unsele...</div>
<div class="t" style="top:334.13px;font-size:10.3px;line-height:10.3px;color:#333;left:107.45px;transform:scaleX(0.94);transform-origin:left 0;-webkit-text-stroke:0.2px #333;">Order 3136</div>
<div class="t" style="top:334.13px;font-size:10.3px;line-height:10.3px;color:#333;left:198.75px;transform:scaleX(0.94);transform-origin:left 0;-webkit-text-stroke:0.2px #333;">AG 220X</div>
<div class="t" style="top:334.13px;font-size:10.3px;line-height:10.3px;color:#333;left:289.95px;transform:scaleX(0.94);transform-origin:left 0;-webkit-text-stroke:0.2px #333;">red</div>
<div class="t" style="top:334.13px;font-size:10.3px;line-height:10.3px;color:#333;left:155.75px;width:400px;text-align:right;transform:scaleX(0.94);transform-origin:right 0;-webkit-text-stroke:0.2px #333;">3</div>
<div class="a" style="left:0.00px;top:347.00px;width:59.25px;height:17.35px;background:#f3f3f3;"></div>
<div class="a" style="left:41.25px;top:349.20px;width:12.50px;height:12.50px;background:#fff;border:1px solid #cfcfcf;box-sizing:border-box;border-radius:1.5px;"></div>
<div class="a" style="left:0.00px;top:363.85px;width:597.15px;height:1.00px;background:#e8e8e8;"></div>
<div class="a" style="left:286.25px;top:347.00px;width:91.30px;height:17.95px;background:#c8c8c8;"></div>
<div class="t" style="top:351.48px;font-size:10.3px;line-height:10.3px;color:#333;left:-363.75px;width:400px;text-align:right;transform:scaleX(0.96);transform-origin:right 0;-webkit-text-stroke:0.2px #333;">21</div>
<div class="t" style="top:351.48px;font-size:10.3px;line-height:10.3px;color:#333;left:61.75px;transform:scaleX(0.94);transform-origin:left 0;-webkit-text-stroke:0.2px #333;">Unsele...</div>
<div class="t" style="top:351.48px;font-size:10.3px;line-height:10.3px;color:#333;left:107.45px;transform:scaleX(0.94);transform-origin:left 0;-webkit-text-stroke:0.2px #333;">Order 3137</div>
<div class="t" style="top:351.48px;font-size:10.3px;line-height:10.3px;color:#333;left:198.75px;transform:scaleX(0.94);transform-origin:left 0;-webkit-text-stroke:0.2px #333;">AG 220X</div>
<div class="t" style="top:351.48px;font-size:10.3px;line-height:10.3px;color:#333;left:289.95px;transform:scaleX(0.94);transform-origin:left 0;-webkit-text-stroke:0.2px #333;">silver</div>
<svg class="a" style="left:416.75px;top:350.90px;" width="12.0" height="10.0" viewBox="0 0 12 10"><path d="M1.5 5.2 4.5 8.2 10.5 2" fill="none" stroke="#0d6e0d" stroke-width="2.4" stroke-linecap="round" stroke-linejoin="round"/></svg>
<div class="t" style="top:351.48px;font-size:10.3px;line-height:10.3px;color:#333;left:155.75px;width:400px;text-align:right;transform:scaleX(0.94);transform-origin:right 0;-webkit-text-stroke:0.2px #333;">4</div>
<div class="a" style="left:0.00px;top:364.35px;width:59.25px;height:17.35px;background:#f3f3f3;"></div>
<div class="a" style="left:41.25px;top:366.55px;width:12.50px;height:12.50px;background:#fff;border:1px solid #cfcfcf;box-sizing:border-box;border-radius:1.5px;"></div>
<div class="a" style="left:0.00px;top:381.20px;width:597.15px;height:1.00px;background:#e8e8e8;"></div>
<div class="a" style="left:286.25px;top:364.35px;width:91.30px;height:17.95px;background:#f88080;"></div>
<div class="t" style="top:368.83px;font-size:10.3px;line-height:10.3px;color:#333;left:-363.75px;width:400px;text-align:right;transform:scaleX(0.96);transform-origin:right 0;-webkit-text-stroke:0.2px #333;">22</div>
<div class="t" style="top:368.83px;font-size:10.3px;line-height:10.3px;color:#333;left:61.75px;transform:scaleX(0.94);transform-origin:left 0;-webkit-text-stroke:0.2px #333;">Unsele...</div>
<div class="t" style="top:368.83px;font-size:10.3px;line-height:10.3px;color:#333;left:107.45px;transform:scaleX(0.94);transform-origin:left 0;-webkit-text-stroke:0.2px #333;">Order 3138</div>
<div class="t" style="top:368.83px;font-size:10.3px;line-height:10.3px;color:#333;left:198.75px;transform:scaleX(0.94);transform-origin:left 0;-webkit-text-stroke:0.2px #333;">AG 220X</div>
<div class="t" style="top:368.83px;font-size:10.3px;line-height:10.3px;color:#333;left:289.95px;transform:scaleX(0.94);transform-origin:left 0;-webkit-text-stroke:0.2px #333;">red</div>
<div class="t" style="top:368.83px;font-size:10.3px;line-height:10.3px;color:#333;left:155.75px;width:400px;text-align:right;transform:scaleX(0.94);transform-origin:right 0;-webkit-text-stroke:0.2px #333;">4</div>
<div class="a" style="left:58.75px;top:0.00px;width:1.00px;height:381.70px;background:#e8e8e8;"></div>
<div class="a" style="left:103.75px;top:0.00px;width:1.00px;height:381.70px;background:#e8e8e8;"></div>
<div class="a" style="left:194.50px;top:0.00px;width:1.00px;height:381.70px;background:#e8e8e8;"></div>
<div class="a" style="left:285.75px;top:0.00px;width:1.00px;height:381.70px;background:#e8e8e8;"></div>
<div class="a" style="left:377.05px;top:0.00px;width:1.00px;height:381.70px;background:#e8e8e8;"></div>
<div class="a" style="left:467.65px;top:0.00px;width:1.00px;height:381.70px;background:#e8e8e8;"></div>
<div class="a" style="left:558.45px;top:0.00px;width:1.00px;height:381.70px;background:#e8e8e8;"></div>
</div>
<div class="a" style="left:1258.40px;top:438.10px;width:14.10px;height:365.90px;background:#f1f1f1;"></div>
<svg class="a" style="left:1261.50px;top:444.50px;" width="6.5" height="3.9" viewBox="0 0 6.5 3.9"><path d="M0 3.9 3.25 0 6.5 3.9" fill="none" stroke="#222" stroke-width="1.9"/></svg>
<div class="a" style="left:1259.40px;top:454.80px;width:12.00px;height:15.20px;background:#c9c9c9;"></div>
<svg class="a" style="left:1261.50px;top:794.50px;" width="6.5" height="3.9" viewBox="0 0 6.5 3.9"><path d="M0 0 3.25 3.9 6.5 0" fill="none" stroke="#222" stroke-width="1.9"/></svg>
<div class="a" style="left:765.50px;top:804.50px;width:492.00px;height:15.00px;background:#f1f1f1;"></div>
<svg class="a" style="left:771.50px;top:808.50px;" width="3.9" height="6.5" viewBox="0 0 3.9 6.5"><path d="M3.9 0 0 3.25 3.9 6.5" fill="none" stroke="#222" stroke-width="1.9"/></svg>
<div class="a" style="left:782.50px;top:806.00px;width:180.00px;height:12.50px;background:#c9c9c9;"></div>
<svg class="a" style="left:1248.50px;top:808.50px;" width="3.9" height="6.5" viewBox="0 0 3.9 6.5"><path d="M0 0 3.9 3.25 0 6.5" fill="none" stroke="#222" stroke-width="1.9"/></svg>
</body></html>
